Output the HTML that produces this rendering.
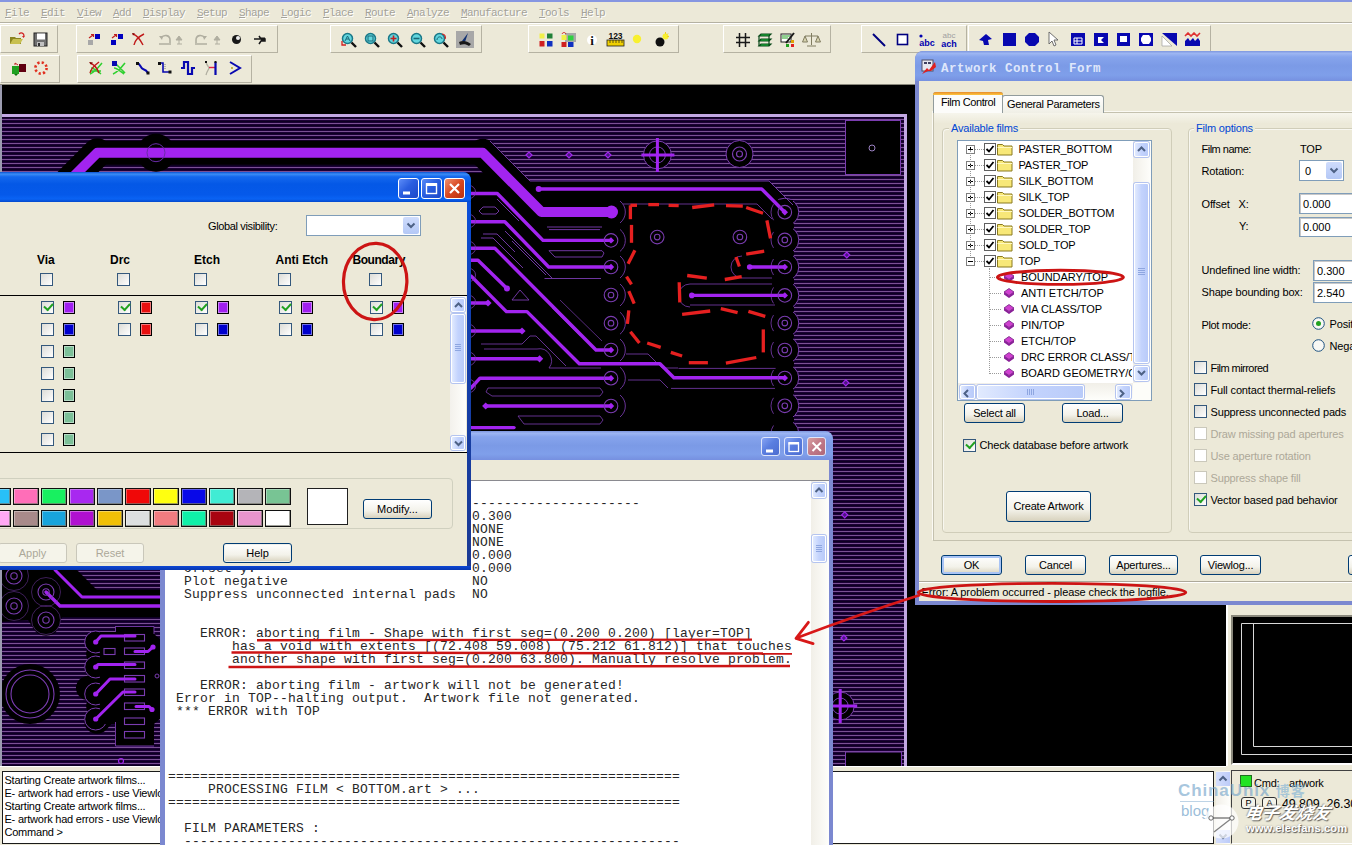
<!DOCTYPE html>
<html><head><meta charset="utf-8"><title>Artwork Control Form</title>
<style>
*{box-sizing:border-box;margin:0;padding:0}
html,body{width:1352px;height:845px;overflow:hidden;background:#ece9d8;font-family:"Liberation Sans",sans-serif;font-size:11px;color:#000}
.abs{position:absolute}
#root{position:absolute;left:0;top:0;width:1352px;height:845px;overflow:hidden;background:#ece9d8}
#topstrip{left:0;top:0;width:1352px;height:2px;background:#8696e1}
#menu{left:0;top:3px;width:1352px;height:20px;background:#ece9d8}
#menu span{position:absolute;top:5px;font-family:"Liberation Mono",monospace;font-size:11px;letter-spacing:-0.6px;color:#a3a29a;text-shadow:1px 1px 0 #fff;white-space:pre;line-height:1}
.tbg{position:absolute;border:1px solid;border-color:#fff #b5b2a2 #b5b2a2 #fff;background:#ece9d8}
#canvas{left:0;top:85px;width:1230px;height:681px;background:#000;overflow:hidden}
.btn{position:absolute;border:1px solid #003c74;border-radius:3px;background:linear-gradient(#fff,#f3f2ea 60%,#d8d2bd);font-size:11px;text-align:center;color:#000;white-space:pre}
.btn.dis{border-color:#c9c7ba;background:#f5f4ea;color:#aca899}
.cb{position:absolute;width:13px;height:13px;border:1px solid #34587c;background:linear-gradient(135deg,#dcdcd7,#fff)}
.cb.dis{border-color:#cac8bb;background:#fff}
.cb.on::after{content:"";position:absolute;left:2px;top:1px;width:7px;height:4px;border-left:2px solid #21a121;border-bottom:2px solid #21a121;transform:rotate(-48deg)}
.sw{position:absolute;width:12px;height:13px;border:1px solid #000;box-shadow:inset 0 0 0 1px rgba(255,255,255,.45)}
.t{position:absolute;white-space:pre;line-height:1}
.b{font-weight:bold}
.sbtn{position:absolute;border:1px solid #fff;border-radius:2px;background:linear-gradient(90deg,#e1eafe,#c3d3fd 50%,#b9cbf9);box-shadow:0 0 0 1px #b4c4f0}
.chev{position:absolute;left:50%;top:50%}
.titlebtn{position:absolute;width:21px;height:21px;border:1px solid #fff;border-radius:3px}
</style></head><body><div id="root">
<div id="topstrip" class="abs"></div>
<div id="menu" class="abs">
<span style="left:5px"><u>F</u>ile</span>
<span style="left:41px"><u>E</u>dit</span>
<span style="left:77px"><u>V</u>iew</span>
<span style="left:113px"><u>A</u>dd</span>
<span style="left:143px"><u>D</u>isplay</span>
<span style="left:197px"><u>S</u>etup</span>
<span style="left:239px"><u>S</u>hape</span>
<span style="left:281px"><u>L</u>ogic</span>
<span style="left:323px"><u>P</u>lace</span>
<span style="left:365px"><u>R</u>oute</span>
<span style="left:407px"><u>A</u>nalyze</span>
<span style="left:461px"><u>M</u>anufacture</span>
<span style="left:539px"><u>T</u>ools</span>
<span style="left:581px"><u>H</u>elp</span>
</div>
<div class="abs" style="left:0;top:22px;width:1352px;height:1px;background:#b4b1a2"></div>
<div class="abs" style="left:0;top:23px;width:1352px;height:1px;background:#fff"></div>
<div class="tbg" style="left:0px;top:25px;width:58px;height:28px"></div>
<div class="tbg" style="left:76px;top:25px;width:202px;height:28px"></div>
<div class="tbg" style="left:330px;top:25px;width:152px;height:28px"></div>
<div class="tbg" style="left:528px;top:25px;width:151px;height:28px"></div>
<div class="tbg" style="left:723px;top:25px;width:108px;height:28px"></div>
<div class="tbg" style="left:861px;top:25px;width:106px;height:28px"></div>
<div class="tbg" style="left:968px;top:25px;width:243px;height:28px"></div>
<div class="tbg" style="left:0px;top:55px;width:60px;height:28px"></div>
<div class="tbg" style="left:77px;top:55px;width:175px;height:28px"></div>
<div class="abs" style="left:0;top:84px;width:1352px;height:1px;background:#8a887c"></div>
<svg class="abs" style="left:9px;top:32px" width="17" height="15" viewBox="0 0 17 15"><path d="M1 5h5l1 1h5v6H1z" fill="#8a8420"/><path d="M1 12l3-5h10l-3 5z" fill="#c8c050"/><path d="M10 2c2-2 5-1 5 2" stroke="#d02020" fill="none" stroke-width="1.3"/><path d="M13 4h3l-1.5 2z" fill="#d02020"/></svg>
<svg class="abs" style="left:33px;top:32px" width="15" height="15" viewBox="0 0 15 15"><rect x="1" y="1" width="13" height="13" fill="#707070" stroke="#202020"/><rect x="4" y="1.5" width="8" height="6" fill="#fff"/><rect x="4" y="10" width="7" height="4" fill="#c0c0c0"/><rect x="5" y="11" width="2" height="3" fill="#303030"/></svg>
<svg class="abs" style="left:87px;top:33px" width="15" height="14" viewBox="0 0 15 14"><rect x="8" y="1" width="5" height="5" fill="#0000c0"/><rect x="1" y="7" width="5" height="5" fill="#a8a8a8"/><path d="M2 5l4-3M4 1.5h2.5v2.5" stroke="#c02020" fill="none" stroke-width="1.2"/></svg>
<svg class="abs" style="left:110px;top:33px" width="15" height="14" viewBox="0 0 15 14"><rect x="8" y="1" width="5" height="5" fill="#0000c0"/><rect x="1" y="7" width="5" height="5" fill="#0000c0"/><path d="M2 5l4-3M4 1.5h2.5v2.5" stroke="#c02020" fill="none" stroke-width="1.2"/></svg>
<svg class="abs" style="left:131px;top:32px" width="16" height="16" viewBox="0 0 16 16"><path d="M2 2c3 1 7 5 10 11M13 2c-4 2-9 5-10 11" stroke="#c01818" fill="none" stroke-width="1.4"/><path d="M1 1l3 .5-2 2z" fill="#800000"/></svg>
<svg class="abs" style="left:158px;top:33px" width="26" height="14" viewBox="0 0 26 14"><path d="M3 5c3-4 9-3 9 2v3M1 11h12" stroke="#b0aea0" fill="none" stroke-width="1.6"/><path d="M1 3l4 0-1 4z" fill="#b0aea0"/><path d="M21 3l3 4h-6zM19 11h5M21 7v4" stroke="#b0aea0" fill="#b0aea0" stroke-width="1"/></svg>
<svg class="abs" style="left:194px;top:33px" width="27" height="14" viewBox="0 0 27 14"><path d="M11 5c-3-4-9-3-9 2v3M1 11h12" stroke="#b0aea0" fill="none" stroke-width="1.6"/><path d="M13 3l-4 0 1 4z" fill="#b0aea0"/><path d="M23 3l3 4h-6zM21 11h5M23 7v4" stroke="#b0aea0" fill="#b0aea0" stroke-width="1"/></svg>
<svg class="abs" style="left:231px;top:34px" width="12" height="12" viewBox="0 0 12 12"><circle cx="5.5" cy="5.5" r="4.5" fill="#181818"/><circle cx="7" cy="4" r="2" fill="#f0f0f0"/></svg>
<svg class="abs" style="left:253px;top:34px" width="14" height="12" viewBox="0 0 14 12"><path d="M1 5h8M6 2l2 3h4v2H8l-2 3" stroke="#181818" fill="none" stroke-width="1.5"/><rect x="8" y="3.5" width="4" height="3.5" fill="#181818"/></svg>
<svg class="abs" style="left:341px;top:32px" width="17" height="17" viewBox="0 0 17 17"><circle cx="6.5" cy="6.5" r="5" fill="#62d6de" stroke="#1a7888" stroke-width="1.5"/><path d="M10.5 10.5l4.5 4.5" stroke="#101010" stroke-width="2.4"/><path d="M4 9l2.5-5 2.5 5M5 7h3" stroke="#1a6878" fill="none"/><path d="M1 9v4h4" stroke="#d02020" fill="none" stroke-width="1.300"/></svg>
<svg class="abs" style="left:364px;top:32px" width="17" height="17" viewBox="0 0 17 17"><circle cx="6.5" cy="6.5" r="5" fill="#62d6de" stroke="#1a7888" stroke-width="1.5"/><path d="M10.5 10.5l4.5 4.5" stroke="#101010" stroke-width="2.4"/><rect x="4" y="4" width="5" height="5" fill="none" stroke="#1a6878"/></svg>
<svg class="abs" style="left:387px;top:32px" width="17" height="17" viewBox="0 0 17 17"><circle cx="6.5" cy="6.5" r="5" fill="#62d6de" stroke="#1a7888" stroke-width="1.5"/><path d="M10.5 10.5l4.5 4.5" stroke="#101010" stroke-width="2.4"/><path d="M3.5 6.5h6M6.5 3.5v6" stroke="#c02020" stroke-width="1.6"/></svg>
<svg class="abs" style="left:410px;top:32px" width="17" height="17" viewBox="0 0 17 17"><circle cx="6.5" cy="6.5" r="5" fill="#62d6de" stroke="#1a7888" stroke-width="1.5"/><path d="M10.5 10.5l4.5 4.5" stroke="#101010" stroke-width="2.4"/><path d="M3.5 6.5h6" stroke="#1a6878" stroke-width="1.6"/></svg>
<svg class="abs" style="left:433px;top:32px" width="17" height="17" viewBox="0 0 17 17"><circle cx="6.5" cy="6.5" r="5" fill="#62d6de" stroke="#1a7888" stroke-width="1.5"/><path d="M10.5 10.5l4.5 4.5" stroke="#101010" stroke-width="2.4"/><path d="M4 8c0-4 5-4 5-1" stroke="#1a6878" fill="none"/><path d="M9 2c3 0 4 3 3 5" stroke="#d02020" fill="none" stroke-width="1.200"/></svg>
<svg class="abs" style="left:456px;top:31px" width="18" height="17" viewBox="0 0 18 17"><rect x="0" y="0" width="18" height="17" fill="#a8a8a8"/><path d="M12 2l-6 8 3 1z" fill="#103070"/><path d="M3 11c4-2 8-1 12 2l-2 2c-3-2-6-2-9-1z" fill="#181818"/></svg>
<svg class="abs" style="left:538px;top:32px" width="16" height="16" viewBox="0 0 16 16"><rect x="1.500" y="1.500" width="5" height="5" fill="#f0f048"/><rect x="9" y="1.500" width="5.500" height="5" fill="#208038"/><rect x="1.500" y="9" width="5" height="5.500" fill="#d02020"/><rect x="9" y="9" width="5.500" height="5.500" fill="#1030c0"/></svg>
<svg class="abs" style="left:560px;top:32px" width="17" height="16" viewBox="0 0 17 16"><rect x="5" y="1" width="11" height="9" fill="#a8a8a8"/><rect x="1.500" y="3" width="5" height="5" fill="#f0f048"/><rect x="8" y="3.500" width="5.500" height="5" fill="#30d040"/><rect x="1.500" y="10" width="5" height="5" fill="#d02020"/><rect x="8" y="10" width="5.500" height="5" fill="#1030c0"/><path d="M2 2c1-2 3-2 4 0" stroke="#d02020" fill="none"/></svg>
<svg class="abs" style="left:587px;top:32px" width="10" height="16" viewBox="0 0 10 16"><circle cx="5" cy="8" r="5" fill="#fff"/><text x="5" y="12.500" font-family="Liberation Serif,serif" font-weight="bold" font-size="13" text-anchor="middle" fill="#101010">i</text></svg>
<svg class="abs" style="left:606px;top:31px" width="19" height="17" viewBox="0 0 19 17"><text x="9.5" y="7.5" font-family="Liberation Sans,sans-serif" font-weight="bold" font-size="8.5" text-anchor="middle" fill="#101010">123</text><rect x="1" y="9" width="17" height="6" fill="#f0d000" stroke="#202020" stroke-width=".8"/><path d="M4 9v3M7 9v3M10 9v3M13 9v3M16 9v3" stroke="#202020" stroke-width=".7"/></svg>
<svg class="abs" style="left:631px;top:33px" width="12" height="12" viewBox="0 0 12 12"><circle cx="6" cy="6" r="4.2" fill="#f8f030"/></svg>
<svg class="abs" style="left:654px;top:32px" width="16" height="16" viewBox="0 0 16 16"><circle cx="6" cy="10" r="4.5" fill="#101010"/><circle cx="11.5" cy="4.5" r="3" fill="#f8f030"/><path d="M11.5 0v2M15 4.5h-2M14 1.5l-1 1" stroke="#f0d020"/></svg>
<svg class="abs" style="left:735px;top:32px" width="16" height="16" viewBox="0 0 16 16"><path d="M4.5 1v14M10.5 1v14M1 5.5h14M1 10.500h14" stroke="#181818" stroke-width="1.5"/></svg>
<svg class="abs" style="left:757px;top:32px" width="16" height="16" viewBox="0 0 16 16"><path d="M2 4l2-2h10l-2 2zM2 9l2-2h10l-2 2zM2 14l2-2h10l-2 2z" fill="#20c040" stroke="#084818" stroke-width="1.2"/><path d="M2 4v10M12 4v10" stroke="#084818" stroke-width="1.2"/></svg>
<svg class="abs" style="left:780px;top:32px" width="18" height="16" viewBox="0 0 18 16"><rect x="1" y="2" width="10" height="8" fill="#fff" stroke="#202020"/><path d="M2 4h8M2 6h6" stroke="#20a020"/><path d="M14 1l-8 10" stroke="#181818" stroke-width="2"/><rect x="11" y="8" width="3" height="3" fill="#e0a000"/><rect x="11" y="12" width="3" height="3" fill="#e02020"/><rect x="6" y="12" width="3" height="3" fill="#20a020"/></svg>
<svg class="abs" style="left:802px;top:32px" width="19" height="16" viewBox="0 0 19 16"><path d="M9.500 1v12M3 4h13M3 4l-2.500 6h5zM16 4l-2.500 6h5zM5 14h9" stroke="#807c60" fill="#d8d4b0" stroke-width="1"/></svg>
<svg class="abs" style="left:871px;top:32px" width="16" height="16" viewBox="0 0 16 16"><path d="M2 2l12 12" stroke="#000080" stroke-width="2"/></svg>
<svg class="abs" style="left:896px;top:33px" width="14" height="14" viewBox="0 0 14 14"><rect x="1.500" y="1.500" width="10" height="10" fill="#fff" stroke="#000080" stroke-width="1.6"/></svg>
<svg class="abs" style="left:918px;top:33px" width="18" height="14" viewBox="0 0 18 14"><circle cx="3" cy="3" r="1.600" fill="#0000b0"/><text x="9" y="12.500" font-family="Liberation Sans,sans-serif" font-weight="bold" font-size="9" text-anchor="middle" fill="#0000b0">abc</text></svg>
<svg class="abs" style="left:940px;top:31px" width="18" height="17" viewBox="0 0 18 17"><text x="9" y="7" font-family="Liberation Sans,sans-serif" font-size="8" text-anchor="middle" fill="#a0a0a0">abc</text><text x="9" y="15.500" font-family="Liberation Sans,sans-serif" font-weight="bold" font-size="9" text-anchor="middle" fill="#0000b0">ach</text></svg>
<svg class="abs" style="left:978px;top:32px" width="15" height="15" viewBox="0 0 15 15"><path d="M1 8l7-6 6 5-4 1 1 5H6l-1-4z" fill="#0808b0"/></svg>
<svg class="abs" style="left:1002px;top:32px" width="15" height="15" viewBox="0 0 15 15"><rect x="1" y="1" width="13" height="13" fill="#0808b0"/></svg>
<svg class="abs" style="left:1024px;top:32px" width="16" height="15" viewBox="0 0 16 15"><path d="M5 1h6l4 4v5l-4 4H5l-4-4V5z" fill="#0808b0"/></svg>
<svg class="abs" style="left:1047px;top:31px" width="12" height="17" viewBox="0 0 12 17"><path d="M2 1v12l3-3 2 5 2-1-2-5h4z" fill="#fff" stroke="#606060" stroke-width=".9"/></svg>
<svg class="abs" style="left:1070px;top:32px" width="16" height="15" viewBox="0 0 16 15"><rect x="1" y="1" width="14" height="13" fill="#0808b0"/><path d="M4 6h8v6H4zM7 6v6M4 9h8" stroke="#fff" fill="none"/></svg>
<svg class="abs" style="left:1093px;top:32px" width="16" height="15" viewBox="0 0 16 15"><rect x="1" y="1" width="14" height="13" fill="#0808b0"/><path d="M5 5h6l-3 3 3 3H5z" fill="#fff"/></svg>
<svg class="abs" style="left:1116px;top:32px" width="15" height="15" viewBox="0 0 15 15"><rect x="1" y="1" width="13" height="13" fill="#0808b0"/><rect x="4" y="4" width="7" height="6" fill="#fff"/></svg>
<svg class="abs" style="left:1138px;top:32px" width="16" height="15" viewBox="0 0 16 15"><rect x="1" y="1" width="14" height="13" fill="#0808b0"/><path d="M5 3h6l2 3v3l-2 3H5l-2-3V6z" fill="#fff"/></svg>
<svg class="abs" style="left:1161px;top:32px" width="17" height="15" viewBox="0 0 17 15"><path d="M1 1h15v13z" fill="#0808b0"/><path d="M1 4l10 10H1z" fill="#fff" stroke="#909090" stroke-width=".6"/></svg>
<svg class="abs" style="left:1184px;top:32px" width="17" height="15" viewBox="0 0 17 15"><path d="M1 4l3-3 3 3 3-3 3 3 3-3" stroke="#e03030" fill="none" stroke-width="1.6"/><path d="M1 14V9l3-3 2 3 3-3 2 3 3-3 2 3v5z" fill="#0808b0"/></svg>
<svg class="abs" style="left:11px;top:60px" width="16" height="16" viewBox="0 0 16 16"><rect x="1" y="6" width="7" height="8" fill="#20a020"/><rect x="8" y="4" width="7" height="8" fill="#600010"/><path d="M4 3l3 2M4 3v2" stroke="#c02020"/><path d="M3 14l2 2 2-2" fill="#107010"/></svg>
<svg class="abs" style="left:33px;top:60px" width="16" height="16" viewBox="0 0 16 16"><circle cx="8" cy="8" r="5.600" fill="none" stroke="#e03020" stroke-width="2.600" stroke-dasharray="2.200 2.200"/></svg>
<svg class="abs" style="left:88px;top:60px" width="16" height="16" viewBox="0 0 16 16"><path d="M2 14c5-2 8-6 12-11M3 8c3 0 6 3 10 6M2 11l11 0" stroke="#30d030" fill="none" stroke-width="1.500"/><path d="M2 3c3 1 7 5 9 10M11 2c-4 3-8 6-9 11" stroke="#c01818" fill="none" stroke-width="1.400"/><path d="M1 2l4 .5-2 2z" fill="#800000"/></svg>
<svg class="abs" style="left:111px;top:60px" width="16" height="16" viewBox="0 0 16 16"><path d="M2 14c5-2 8-6 12-11M3 8c3 0 6 3 10 6M5 4l9 9" stroke="#30d030" fill="none" stroke-width="1.600"/><rect x="1" y="1" width="5" height="5" fill="#0808b0"/></svg>
<svg class="abs" style="left:135px;top:61px" width="16" height="14" viewBox="0 0 16 14"><path d="M2 2c4 1 3 5 6 6s4 2 5 4" stroke="#0808b0" fill="none" stroke-width="2"/><rect x="1" y="1" width="3" height="3" fill="#101010"/><rect x="11.500" y="10.500" width="3" height="3" fill="#101010"/></svg>
<svg class="abs" style="left:157px;top:61px" width="16" height="14" viewBox="0 0 16 14"><path d="M3 2h3v9h7" stroke="#0808b0" fill="none" stroke-width="1.600"/><rect x="1" y="1" width="3" height="3" fill="#101010"/><rect x="11.500" y="9.500" width="3" height="3" fill="#101010"/><path d="M8 3v5" stroke="#808080" stroke-dasharray="1 1"/></svg>
<svg class="abs" style="left:180px;top:60px" width="16" height="16" viewBox="0 0 16 16"><path d="M1 8h3V2h4v12h4V8h3" stroke="#0808b0" fill="none" stroke-width="2.200"/></svg>
<svg class="abs" style="left:204px;top:60px" width="14" height="16" viewBox="0 0 14 16"><path d="M2 2c1 4 3 5 3 6s-2 3-3 7" stroke="#b0aea0" fill="none" stroke-width="1.300"/><path d="M5 7.500h6" stroke="#e02040" stroke-width="1.400"/><path d="M11.500 2v13" stroke="#0808b0" stroke-width="2.200"/><rect x="1" y="1" width="2" height="2" fill="#101010"/><rect x="10.500" y="1" width="2" height="2" fill="#101010"/></svg>
<svg class="abs" style="left:228px;top:60px" width="14" height="16" viewBox="0 0 14 16"><path d="M2 2l10 6-10 6" stroke="#0808b0" fill="none" stroke-width="2"/><circle cx="4" cy="8" r="1" fill="#b0a020"/></svg>
<svg class="abs" style="left:0;top:85px" width="1230" height="681" viewBox="0 85 1230 681" shape-rendering="auto">
<defs><pattern id="hatch" x="0" y="0" width="8" height="4" patternUnits="userSpaceOnUse"><rect width="8" height="4" fill="#1b0036"/><rect y="1" width="8" height="1" fill="#0d0022"/><rect y="3" width="8" height="1" fill="#7a5094"/></pattern></defs>
<rect x="0" y="85" width="1230" height="681" fill="#000"/>
<rect x="0" y="116" width="905" height="650" fill="url(#hatch)"/>
<path d="M465 173 L522 173 L530 181 L769 181 L794 206 L794 432 L465 432Z" fill="#000"/>
<path d="M40 210 L97.300 152.700 L482.700 152.700 L541.400 212 L611 212" fill="none" stroke="#000" stroke-width="24" stroke-linecap="round" stroke-linejoin="round" />
<path d="M40 210 L97.300 152.700" fill="none" stroke="#000" stroke-width="29" stroke-linecap="round" stroke-linejoin="round" />
<path d="M482.700 152.700 L541.400 212" fill="none" stroke="#000" stroke-width="28" stroke-linecap="round" stroke-linejoin="round" />
<circle cx="156" cy="152.700" r="19" fill="#000"/>
<circle cx="784.800" cy="212.2" r="14" fill="#000" stroke="#7a3cb0" stroke-width="1"/>
<circle cx="784.800" cy="239.9" r="14" fill="#000" stroke="#7a3cb0" stroke-width="1"/>
<circle cx="784.800" cy="267" r="14" fill="#000" stroke="#7a3cb0" stroke-width="1"/>
<circle cx="784.800" cy="295.4" r="14" fill="#000" stroke="#7a3cb0" stroke-width="1"/>
<circle cx="784.800" cy="323.1" r="14" fill="#000" stroke="#7a3cb0" stroke-width="1"/>
<circle cx="784.800" cy="350" r="14" fill="#000" stroke="#7a3cb0" stroke-width="1"/>
<circle cx="784.800" cy="378" r="14" fill="#000" stroke="#7a3cb0" stroke-width="1"/>
<circle cx="784.800" cy="405.8" r="14" fill="#000" stroke="#7a3cb0" stroke-width="1"/>
<circle cx="784.800" cy="433.5" r="14" fill="#000" stroke="#7a3cb0" stroke-width="1"/>
<rect x="760" y="200" width="33" height="232" fill="#000"/>
<path d="M773.500 204.2 A14 14 0 0 0 773.500 220.2" fill="none" stroke="#7a3cb0" stroke-width="1" opacity=".8"/>
<path d="M773.500 231.9 A14 14 0 0 0 773.500 247.9" fill="none" stroke="#7a3cb0" stroke-width="1" opacity=".8"/>
<path d="M773.500 259 A14 14 0 0 0 773.500 275" fill="none" stroke="#7a3cb0" stroke-width="1" opacity=".8"/>
<path d="M773.500 287.4 A14 14 0 0 0 773.500 303.4" fill="none" stroke="#7a3cb0" stroke-width="1" opacity=".8"/>
<path d="M773.500 315.1 A14 14 0 0 0 773.500 331.1" fill="none" stroke="#7a3cb0" stroke-width="1" opacity=".8"/>
<path d="M773.500 342 A14 14 0 0 0 773.500 358" fill="none" stroke="#7a3cb0" stroke-width="1" opacity=".8"/>
<path d="M773.500 370 A14 14 0 0 0 773.500 386" fill="none" stroke="#7a3cb0" stroke-width="1" opacity=".8"/>
<path d="M773.500 397.8 A14 14 0 0 0 773.500 413.8" fill="none" stroke="#7a3cb0" stroke-width="1" opacity=".8"/>
<path d="M773.500 425.5 A14 14 0 0 0 773.500 441.5" fill="none" stroke="#7a3cb0" stroke-width="1" opacity=".8"/>
<rect x="845.500" y="120.500" width="55" height="54" fill="#000" stroke="#7a3cb0" stroke-width="1"/>
<circle cx="872" cy="148" r="3" fill="none" stroke="#9a80c0" stroke-width="1"/>
<rect x="845.500" y="752" width="56" height="16" fill="#000" stroke="#7a3cb0" stroke-width="1"/>
<path d="M526 155L529 152L532 155L529 158Z" fill="#4a1880" stroke="#a224f0" stroke-width="1.200"/>
<path d="M566 155L569 152L572 155L569 158Z" fill="#4a1880" stroke="#a224f0" stroke-width="1.200"/>
<path d="M605 155L608 152L611 155L608 158Z" fill="#4a1880" stroke="#a224f0" stroke-width="1.200"/>
<path d="M843.8 255L846.8 252L849.8 255L846.8 258Z" fill="#4a1880" stroke="#a224f0" stroke-width="1.200"/>
<path d="M842.8 382.8L845.8 379.8L848.8 382.8L845.8 385.8Z" fill="#4a1880" stroke="#a224f0" stroke-width="1.200"/>
<path d="M841.7 514.8L844.7 511.79999999999995L847.7 514.8L844.7 517.8Z" fill="#4a1880" stroke="#a224f0" stroke-width="1.200"/>
<path d="M840.9 638L843.9 635L846.9 638L843.9 641Z" fill="#4a1880" stroke="#a224f0" stroke-width="1.200"/>
<circle cx="657.4" cy="154.9" r="14" fill="#000" stroke="#7a3cb0" stroke-width="1"/>
<circle cx="657.4" cy="154.9" r="8" fill="none" stroke="#7a3cb0" stroke-width="1"/>
<path d="M641.4 154.9H674.4M657.4 137.9V171.9" stroke="#a224f0" stroke-width="3" fill="none"/>
<circle cx="840.2" cy="706" r="14" fill="#000" stroke="#7a3cb0" stroke-width="1"/>
<circle cx="840.2" cy="706" r="8" fill="none" stroke="#7a3cb0" stroke-width="1"/>
<path d="M824.2 706H857.2M840.2 689V723" stroke="#a224f0" stroke-width="3" fill="none"/>
<circle cx="739.500" cy="154" r="13.500" fill="#000" stroke="#7a3cb0" stroke-width="1"/>
<circle cx="739.500" cy="154" r="7" fill="none" stroke="#7a3cb0" stroke-width="1.200"/><circle cx="739.500" cy="154" r="3" fill="none" stroke="#7a3cb0" stroke-width="1.200"/>
<path d="M490 141 L530 181 L769 181 L793 205" fill="none" stroke="#7a3cb0" stroke-width="1" opacity="0.9"/>
<path d="M547 227 H602 M549 229.600 H600" fill="none" stroke="#7a3cb0" stroke-width="1" opacity="0.9"/>
<path d="M549 250.700 H602 L604 253 L602 257 H555 L549 250.700" fill="none" stroke="#7a3cb0" stroke-width="1" opacity="0.9"/>
<path d="M544.500 278.500 H601" fill="none" stroke="#7a3cb0" stroke-width="1" opacity="0.9"/>
<path d="M497 199 L519 221 M505 231 L552 278 M512 241 L546 275" fill="none" stroke="#7a3cb0" stroke-width="1" opacity="0.9"/>
<path d="M483 207 h12 l4 4 -3 3 h-14 l-3 -3z" fill="none" stroke="#7a3cb0" stroke-width="1" opacity="0.9"/>
<path d="M512 300 L520 290 L529 300Z" fill="none" stroke="#7a3cb0" stroke-width="1" opacity="0.9"/>
<path d="M483 234 h14 l18 18 M481 238 h12 l30 30" fill="none" stroke="#7a3cb0" stroke-width="1" opacity="0.9"/>
<path d="M481 344 H522 L530 336 L536 336 L566 366 M484 349 H537 A12 12 0 0 1 549 368 H601" fill="none" stroke="#7a3cb0" stroke-width="1" opacity="0.8"/>
<path d="M488 388 H600 L603 392 L600 396 H492 L486 392Z" fill="none" stroke="#7a3cb0" stroke-width="1" opacity="0.8"/>
<path d="M518 416 H600 L603 420 L600 424 H524Z" fill="none" stroke="#7a3cb0" stroke-width="1" opacity="0.8"/>
<path d="M560 300 L602 341 M552 308 L580 336" fill="none" stroke="#7a3cb0" stroke-width="1" opacity="0.7"/>
<path d="M690 305 H775 M678.500 368.400 H775.600 M671 388.400 H775 M626 354 H648 L662 368 H678 M628 380 H660 L668 388" fill="none" stroke="#7a3cb0" stroke-width="1" opacity="0.8"/>
<path d="M623 204 H757 L772 219" fill="none" stroke="#7a3cb0" stroke-width="1" opacity="0.8"/>
<path d="M742 256 A11 11 0 0 0 742 278 H772 M690 284 A11.500 11.500 0 0 0 690 307 M690 284 H772" fill="none" stroke="#7a3cb0" stroke-width="1" opacity="0.8"/>
<path d="M620 201 A14 14 0 0 1 620 223" fill="none" stroke="#7a3cb0" stroke-width="1" opacity=".85"/>
<path d="M620 229.4 A14 14 0 0 1 620 251.4" fill="none" stroke="#7a3cb0" stroke-width="1" opacity=".85"/>
<path d="M620 256 A14 14 0 0 1 620 278" fill="none" stroke="#7a3cb0" stroke-width="1" opacity=".85"/>
<path d="M620 284 A14 14 0 0 1 620 306" fill="none" stroke="#7a3cb0" stroke-width="1" opacity=".85"/>
<path d="M620 312.2 A14 14 0 0 1 620 334.2" fill="none" stroke="#7a3cb0" stroke-width="1" opacity=".85"/>
<path d="M620 339 A14 14 0 0 1 620 361" fill="none" stroke="#7a3cb0" stroke-width="1" opacity=".85"/>
<path d="M620 367.2 A14 14 0 0 1 620 389.2" fill="none" stroke="#7a3cb0" stroke-width="1" opacity=".85"/>
<path d="M620 395 A14 14 0 0 1 620 417" fill="none" stroke="#7a3cb0" stroke-width="1" opacity=".85"/>
<path d="M40 210 L97.300 152.700 L482.700 152.700 L541.400 212 L611 212" fill="none" stroke="#a224f0" stroke-width="10" stroke-linecap="round" stroke-linejoin="round" />
<circle cx="611.500" cy="212" r="6.500" fill="#a224f0"/>
<circle cx="156" cy="152.700" r="9" fill="none" stroke="#6a2ca8" stroke-width="1"/>
<path d="M538.700 189 H761.700 L784.800 212.200" fill="none" stroke="#a224f0" stroke-width="3.4" stroke-linecap="round" stroke-linejoin="round" />
<circle cx="538.700" cy="189" r="3" fill="#a224f0"/>
<path d="M471 193.500 H497.300 L543 240.400 H611" fill="none" stroke="#a224f0" stroke-width="3.4" stroke-linecap="round" stroke-linejoin="round" />
<path d="M471 221.700 H504.800 L548.700 267 H611" fill="none" stroke="#a224f0" stroke-width="3.4" stroke-linecap="round" stroke-linejoin="round" />
<path d="M471 248.200 H494.800 L596 350 H611" fill="none" stroke="#a224f0" stroke-width="3.4" stroke-linecap="round" stroke-linejoin="round" />
<path d="M471 260.300 H478 L507 288.500" fill="none" stroke="#a224f0" stroke-width="3.4" stroke-linecap="round" stroke-linejoin="round" />
<circle cx="507" cy="288.500" r="3" fill="#a224f0"/>
<path d="M471 276 L506.400 311.600 H527 L579.300 363.800 H660 L673.900 377.700 H784.800" fill="none" stroke="#a224f0" stroke-width="3.4" stroke-linecap="round" stroke-linejoin="round" />
<path d="M471 303 H488" fill="none" stroke="#a224f0" stroke-width="3.4" stroke-linecap="round" stroke-linejoin="round" />
<path d="M484.4 303L488 299.4L491.6 303L488 306.6Z" fill="#a224f0"/>
<path d="M471 331 H522" fill="none" stroke="#a224f0" stroke-width="3.4" stroke-linecap="round" stroke-linejoin="round" />
<path d="M518.4 331L522 327.4L525.6 331L522 334.6Z" fill="#a224f0"/>
<path d="M471 358.800 H539.600" fill="none" stroke="#a224f0" stroke-width="3.4" stroke-linecap="round" stroke-linejoin="round" />
<path d="M536.0 358.8L539.6 355.2L543.2 358.8L539.6 362.40000000000003Z" fill="#a224f0"/>
<path d="M471 388 L480 378.200 H611" fill="none" stroke="#a224f0" stroke-width="3.4" stroke-linecap="round" stroke-linejoin="round" />
<path d="M485.700 406 H611" fill="none" stroke="#a224f0" stroke-width="3.4" stroke-linecap="round" stroke-linejoin="round" />
<path d="M482.09999999999997 406L485.7 402.4L489.3 406L485.7 409.6Z" fill="#a224f0"/>
<path d="M471 427.600 H514" fill="none" stroke="#a224f0" stroke-width="3.4" stroke-linecap="round" stroke-linejoin="round" />
<path d="M749.700 267 H784.800" fill="none" stroke="#a224f0" stroke-width="3.4" stroke-linecap="round" stroke-linejoin="round" />
<circle cx="749.700" cy="267" r="2.800" fill="#a224f0"/>
<path d="M691.800 295.400 H784.800" fill="none" stroke="#a224f0" stroke-width="3.4" stroke-linecap="round" stroke-linejoin="round" />
<circle cx="691.800" cy="295.400" r="2.800" fill="#a224f0"/>
<circle cx="611" cy="240.4" r="6.800" fill="none" stroke="#7a3cb0" stroke-width="1.100"/>
<path d="M607.8 240.4L611 237.20000000000002L614.2 240.4L611 243.6Z" fill="#a224f0"/>
<circle cx="611" cy="267" r="6.800" fill="none" stroke="#7a3cb0" stroke-width="1.100"/>
<path d="M607.8 267L611 263.8L614.2 267L611 270.2Z" fill="#a224f0"/>
<circle cx="611" cy="295" r="6.800" fill="none" stroke="#7a3cb0" stroke-width="1.100"/>
<circle cx="611" cy="295" r="2.800" fill="none" stroke="#7a3cb0" stroke-width="1.100"/>
<circle cx="611" cy="323.2" r="6.800" fill="none" stroke="#7a3cb0" stroke-width="1.100"/>
<circle cx="611" cy="323.2" r="2.800" fill="none" stroke="#7a3cb0" stroke-width="1.100"/>
<circle cx="611" cy="350" r="6.800" fill="none" stroke="#7a3cb0" stroke-width="1.100"/>
<path d="M607.8 350L611 346.8L614.2 350L611 353.2Z" fill="#a224f0"/>
<circle cx="611" cy="378.2" r="6.800" fill="none" stroke="#7a3cb0" stroke-width="1.100"/>
<path d="M607.8 378.2L611 375.0L614.2 378.2L611 381.4Z" fill="#a224f0"/>
<circle cx="611" cy="406" r="6.800" fill="none" stroke="#7a3cb0" stroke-width="1.100"/>
<path d="M607.8 406L611 402.8L614.2 406L611 409.2Z" fill="#a224f0"/>
<circle cx="784.8" cy="212.2" r="6.800" fill="none" stroke="#7a3cb0" stroke-width="1.100"/>
<path d="M781.5999999999999 212.2L784.8 209.0L788.0 212.2L784.8 215.39999999999998Z" fill="#a224f0"/>
<circle cx="784.8" cy="239.9" r="6.800" fill="none" stroke="#7a3cb0" stroke-width="1.100"/>
<circle cx="784.8" cy="239.9" r="2.800" fill="none" stroke="#7a3cb0" stroke-width="1.100"/>
<circle cx="784.8" cy="267" r="6.800" fill="none" stroke="#7a3cb0" stroke-width="1.100"/>
<path d="M781.5999999999999 267L784.8 263.8L788.0 267L784.8 270.2Z" fill="#a224f0"/>
<circle cx="784.8" cy="295.4" r="6.800" fill="none" stroke="#7a3cb0" stroke-width="1.100"/>
<path d="M781.5999999999999 295.4L784.8 292.2L788.0 295.4L784.8 298.59999999999997Z" fill="#a224f0"/>
<circle cx="784.8" cy="323.1" r="6.800" fill="none" stroke="#7a3cb0" stroke-width="1.100"/>
<circle cx="784.8" cy="323.1" r="2.800" fill="none" stroke="#7a3cb0" stroke-width="1.100"/>
<circle cx="784.8" cy="350" r="6.800" fill="none" stroke="#7a3cb0" stroke-width="1.100"/>
<circle cx="784.8" cy="350" r="2.800" fill="none" stroke="#7a3cb0" stroke-width="1.100"/>
<circle cx="784.8" cy="378" r="6.800" fill="none" stroke="#7a3cb0" stroke-width="1.100"/>
<path d="M781.5999999999999 378L784.8 374.8L788.0 378L784.8 381.2Z" fill="#a224f0"/>
<circle cx="784.8" cy="405.8" r="6.800" fill="none" stroke="#7a3cb0" stroke-width="1.100"/>
<circle cx="784.8" cy="405.8" r="2.800" fill="none" stroke="#7a3cb0" stroke-width="1.100"/>
<circle cx="657.2" cy="237.1" r="6.800" fill="none" stroke="#7a3cb0" stroke-width="1.100"/>
<circle cx="657.2" cy="237.1" r="2.800" fill="none" stroke="#7a3cb0" stroke-width="1.100"/>
<circle cx="739.9" cy="237" r="6.800" fill="none" stroke="#7a3cb0" stroke-width="1.100"/>
<circle cx="739.9" cy="237" r="2.800" fill="none" stroke="#7a3cb0" stroke-width="1.100"/>
<circle cx="469" cy="192" r="6.500" fill="none" stroke="#7a3cb0" stroke-width="1" opacity=".8"/>
<circle cx="469" cy="221" r="6.500" fill="none" stroke="#7a3cb0" stroke-width="1" opacity=".8"/>
<circle cx="469" cy="248" r="6.500" fill="none" stroke="#7a3cb0" stroke-width="1" opacity=".8"/>
<circle cx="469" cy="275" r="6.500" fill="none" stroke="#7a3cb0" stroke-width="1" opacity=".8"/>
<circle cx="469" cy="302" r="6.500" fill="none" stroke="#7a3cb0" stroke-width="1" opacity=".8"/>
<circle cx="469" cy="331" r="6.500" fill="none" stroke="#7a3cb0" stroke-width="1" opacity=".8"/>
<circle cx="469" cy="358.8" r="6.500" fill="none" stroke="#7a3cb0" stroke-width="1" opacity=".8"/>
<circle cx="469" cy="386" r="6.500" fill="none" stroke="#7a3cb0" stroke-width="1" opacity=".8"/>
<path d="M630.4 219.2L630.4 205.3" stroke="#e62020" stroke-width="3.300" stroke-linecap="butt" fill="none"/>
<path d="M630.4 205.3L637 205.3" stroke="#e62020" stroke-width="3.300" stroke-linecap="butt" fill="none"/>
<path d="M648.3 204.6L659 204.6" stroke="#e62020" stroke-width="3.300" stroke-linecap="butt" fill="none"/>
<path d="M668.6 205.3L678.7 205.7" stroke="#e62020" stroke-width="3.300" stroke-linecap="butt" fill="none"/>
<path d="M692.2 207.5L714.2 204.8" stroke="#e62020" stroke-width="3.300" stroke-linecap="butt" fill="none"/>
<path d="M726 205.7L742.8 206.2" stroke="#e62020" stroke-width="3.300" stroke-linecap="butt" fill="none"/>
<path d="M746.2 207.5L763 213.2" stroke="#e62020" stroke-width="3.300" stroke-linecap="butt" fill="none"/>
<path d="M766.9 220.4L770.5 238.3" stroke="#e62020" stroke-width="3.300" stroke-linecap="butt" fill="none"/>
<path d="M746.2 254.1L764.2 251.2" stroke="#e62020" stroke-width="3.300" stroke-linecap="butt" fill="none"/>
<path d="M736 257L739.4 266.5" stroke="#e62020" stroke-width="3.300" stroke-linecap="butt" fill="none"/>
<path d="M724.8 279.5L741.7 276.6" stroke="#e62020" stroke-width="3.300" stroke-linecap="butt" fill="none"/>
<path d="M687.2 275.5L706.8 278.2" stroke="#e62020" stroke-width="3.300" stroke-linecap="butt" fill="none"/>
<path d="M679.2 282.2L679.8 302.4" stroke="#e62020" stroke-width="3.300" stroke-linecap="butt" fill="none"/>
<path d="M682.1 314.4L710.2 311" stroke="#e62020" stroke-width="3.300" stroke-linecap="butt" fill="none"/>
<path d="M720.8 308.7L737.6 312.6" stroke="#e62020" stroke-width="3.300" stroke-linecap="butt" fill="none"/>
<path d="M748.4 311.4L765.3 316.4" stroke="#e62020" stroke-width="3.300" stroke-linecap="butt" fill="none"/>
<path d="M763.3 329.4L763.3 352.4" stroke="#e62020" stroke-width="3.300" stroke-linecap="butt" fill="none"/>
<path d="M725.9 363.2L756.3 357.5" stroke="#e62020" stroke-width="3.300" stroke-linecap="butt" fill="none"/>
<path d="M688.8 362.7L707.9 362.7" stroke="#e62020" stroke-width="3.300" stroke-linecap="butt" fill="none"/>
<path d="M670.8 352.4L682.1 356" stroke="#e62020" stroke-width="3.300" stroke-linecap="butt" fill="none"/>
<path d="M647.2 343L660.7 347.4" stroke="#e62020" stroke-width="3.300" stroke-linecap="butt" fill="none"/>
<path d="M630.4 331.7L639.4 343" stroke="#e62020" stroke-width="3.300" stroke-linecap="butt" fill="none"/>
<path d="M628.8 310.3L627.4 323.8" stroke="#e62020" stroke-width="3.300" stroke-linecap="butt" fill="none"/>
<path d="M628.8 291.2L634.2 303.6" stroke="#e62020" stroke-width="3.300" stroke-linecap="butt" fill="none"/>
<path d="M626.5 276.6L631.5 284.4" stroke="#e62020" stroke-width="3.300" stroke-linecap="butt" fill="none"/>
<path d="M634.9 250.3L628.1 263.8" stroke="#e62020" stroke-width="3.300" stroke-linecap="butt" fill="none"/>
<path d="M631.5 224.9L631.5 242.8" stroke="#e62020" stroke-width="3.300" stroke-linecap="butt" fill="none"/>
<path d="M0 568 H161 V617 H62 L56 632 A15 15 0 0 1 32 626 L28 620 L0 622Z" fill="#000"/>
<circle cx="14" cy="576" r="14.500" fill="#000"/>
<circle cx="14" cy="606" r="14.500" fill="#000"/>
<circle cx="46" cy="592" r="14.500" fill="#000"/>
<circle cx="46" cy="620" r="14.500" fill="#000"/>
<path d="M75 568 H161 V590 H97Z" fill="url(#hatch)"/>
<path d="M52 567 L82 597 H161" fill="none" stroke="#000" stroke-width="11" stroke-linecap="round" stroke-linejoin="round"/>
<path d="M46 592 L60 606 H161" fill="none" stroke="#000" stroke-width="11" stroke-linecap="round" stroke-linejoin="round"/>
<path d="M55 570 L82 597 H161" fill="none" stroke="#a224f0" stroke-width="3" stroke-linecap="round" stroke-linejoin="round" />
<path d="M46 592 L60 606 H161" fill="none" stroke="#a224f0" stroke-width="3.4" stroke-linecap="round" stroke-linejoin="round" />
<circle cx="14" cy="576" r="8" fill="none" stroke="#7a3cb0" stroke-width="1.100"/><circle cx="14" cy="576" r="3.200" fill="none" stroke="#7a3cb0" stroke-width="1.100"/>
<circle cx="14" cy="576" r="14.500" fill="none" stroke="#7a3cb0" stroke-width="1" opacity=".5"/>
<circle cx="14" cy="606" r="8" fill="none" stroke="#7a3cb0" stroke-width="1.100"/><circle cx="14" cy="606" r="3.200" fill="none" stroke="#7a3cb0" stroke-width="1.100"/>
<circle cx="14" cy="606" r="14.500" fill="none" stroke="#7a3cb0" stroke-width="1" opacity=".5"/>
<circle cx="46" cy="592" r="8" fill="none" stroke="#7a3cb0" stroke-width="1.100"/><circle cx="46" cy="592" r="3.200" fill="none" stroke="#7a3cb0" stroke-width="1.100"/>
<circle cx="46" cy="592" r="14.500" fill="none" stroke="#7a3cb0" stroke-width="1" opacity=".5"/>
<circle cx="46" cy="620" r="8" fill="none" stroke="#7a3cb0" stroke-width="1.100"/><circle cx="46" cy="620" r="3.200" fill="none" stroke="#7a3cb0" stroke-width="1.100"/>
<circle cx="46" cy="620" r="14.500" fill="none" stroke="#7a3cb0" stroke-width="1" opacity=".5"/>
<circle cx="30" cy="694" r="30" fill="#000"/>
<circle cx="30" cy="694" r="24" fill="none" stroke="#7a3cb0" stroke-width="1.100"/><circle cx="30" cy="694" r="19" fill="none" stroke="#7a3cb0" stroke-width="1.100"/>
<path d="M115 626 H154 V634 L161 640 V718 L154 724 V746 H115 V720 L106 730 A11 11 0 0 1 88 712 A11 11 0 0 1 88 700 A11 11 0 0 1 88 676 A11 11 0 0 1 88 660 A11 11 0 0 1 88 648 A11 11 0 0 1 100 632 L115 632Z" fill="#000"/>
<circle cx="95.700" cy="642" r="11" fill="#000" stroke="#7a3cb0" stroke-width="1" opacity="1"/>
<circle cx="95.700" cy="667" r="11" fill="#000" stroke="#7a3cb0" stroke-width="1" opacity="1"/>
<circle cx="95.700" cy="694" r="11" fill="#000" stroke="#7a3cb0" stroke-width="1" opacity="1"/>
<circle cx="95.700" cy="719" r="11" fill="#000" stroke="#7a3cb0" stroke-width="1" opacity="1"/>
<rect x="100" y="632" width="22" height="92" fill="#000"/>
<path d="M115 626.500 H154 V634 M154 746 H115.500 V722 M115.500 626.500 V632" fill="none" stroke="#7a3cb0" stroke-width="1" opacity="0.9"/>
<rect x="124.500" y="634.5" width="20" height="6.500" fill="none" stroke="#7a3cb0" stroke-width="1.100"/>
<rect x="124.500" y="648" width="20" height="6.500" fill="none" stroke="#7a3cb0" stroke-width="1.100"/>
<rect x="124.500" y="662" width="20" height="6.500" fill="none" stroke="#7a3cb0" stroke-width="1.100"/>
<rect x="124.500" y="675.5" width="20" height="6.500" fill="none" stroke="#7a3cb0" stroke-width="1.100"/>
<rect x="124.500" y="689" width="20" height="6.500" fill="none" stroke="#7a3cb0" stroke-width="1.100"/>
<rect x="124.500" y="703" width="20" height="6.500" fill="none" stroke="#7a3cb0" stroke-width="1.100"/>
<rect x="124.500" y="718" width="20" height="6.500" fill="none" stroke="#7a3cb0" stroke-width="1.100"/>
<rect x="124.500" y="731.5" width="20" height="6.500" fill="none" stroke="#7a3cb0" stroke-width="1.100"/>
<rect x="104" y="648.500" width="11" height="6" fill="none" stroke="#7a3cb0" stroke-width="1.100"/>
<path d="M95.700 642 L101 636 H135" fill="none" stroke="#a224f0" stroke-width="3" stroke-linecap="round" stroke-linejoin="round" />
<path d="M95.700 667 L98 664.500 H135" fill="none" stroke="#a224f0" stroke-width="3" stroke-linecap="round" stroke-linejoin="round" />
<path d="M95.700 694 L110 679 H135" fill="none" stroke="#a224f0" stroke-width="3" stroke-linecap="round" stroke-linejoin="round" />
<path d="M95.700 719 L123 692 H135" fill="none" stroke="#a224f0" stroke-width="3" stroke-linecap="round" stroke-linejoin="round" />
<path d="M135 651.500 H148 L153 647" fill="none" stroke="#a224f0" stroke-width="3" stroke-linecap="round" stroke-linejoin="round" />
<path d="M136 706.500 H149 L152 709.500" fill="none" stroke="#a224f0" stroke-width="3" stroke-linecap="round" stroke-linejoin="round" />
<circle cx="95.700" cy="642" r="2.600" fill="#a224f0"/>
<circle cx="95.700" cy="667" r="2.600" fill="#a224f0"/>
<circle cx="95.700" cy="694" r="2.600" fill="#a224f0"/>
<circle cx="95.700" cy="719" r="2.600" fill="#a224f0"/>
<circle cx="153" cy="647" r="2.600" fill="#a224f0"/>
<circle cx="152" cy="709.5" r="2.600" fill="#a224f0"/>
<circle cx="121" cy="761" r="2.500" fill="none" stroke="#a224f0" stroke-width="1.200"/>
<circle cx="157" cy="676" r="2" fill="none" stroke="#7a3cb0" stroke-width="1"/>
<path d="M0 115.500 H905.500 V766" fill="none" stroke="#c2a8e2" stroke-width="3"/>
<rect x="0" y="85" width="2" height="681" fill="#9c9cb0"/>
</svg>
<div class="abs" style="left:1226px;top:605px;width:126px;height:161px;background:#ece9d8"></div>
<div class="abs" style="left:1226px;top:605px;width:2px;height:161px;background:#fff"></div>
<div class="abs" style="left:1231px;top:615px;width:130px;height:150px;border:2px solid;border-color:#8a887c #fff #fff #8a887c;background:#000"></div>
<svg class="abs" style="left:1233px;top:617px" width="119" height="146"><path d="M120 6.500H8.500V137.500H120M20.500 6.500V129.500H120" fill="none" stroke="#d8d8d8" stroke-width="1"/></svg>
<div class="abs" style="left:0;top:766px;width:1352px;height:79px;background:#ece9d8"></div>
<div class="abs" style="left:0;top:766px;width:1226px;height:1px;background:#fff"></div>
<div class="abs" style="left:2px;top:771px;width:1212px;height:73px;border:1px solid #1a1a1a;background:#fff"></div>
<div class="t" style="left:4.500px;top:775.0px;font-size:11px;letter-spacing:-0.220px">Starting Create artwork films...</div>
<div class="t" style="left:4.500px;top:788.1px;font-size:11px;letter-spacing:-0.220px">E- artwork had errors - use Viewlog to review the log file.</div>
<div class="t" style="left:4.500px;top:801.2px;font-size:11px;letter-spacing:-0.220px">Starting Create artwork films...</div>
<div class="t" style="left:4.500px;top:814.3px;font-size:11px;letter-spacing:-0.220px">E- artwork had errors - use Viewlog to review the log file.</div>
<div class="t" style="left:4.500px;top:827.4px;font-size:11px;letter-spacing:-0.220px">Command &gt;</div>
<div class="abs" style="left:1216px;top:771px;width:14px;height:73px;background:linear-gradient(90deg,#f1efe8,#fefefb)"></div>
<div class="abs" style="left:1216px;top:772px;width:14px;height:14px;background:linear-gradient(90deg,#d4defc,#bccbf8)"><svg width="14" height="14" style="position:absolute;left:0;top:0"><path d="M3.500 8.500l3.500-3.500 3.500 3.500" stroke="#4d6185" stroke-width="2" fill="none"/></svg></div>
<div class="abs" style="left:1216px;top:830px;width:14px;height:13px;background:linear-gradient(90deg,#d4defc,#bccbf8)"><svg width="14" height="13" style="position:absolute;left:0;top:0"><path d="M3.500 4.500l3.500 3.500 3.500-3.500" stroke="#4d6185" stroke-width="2" fill="none"/></svg></div>
<div class="abs" style="left:1231px;top:770px;width:125px;height:74px;border:1px solid;border-color:#404040 #fff #fff #404040;background:#ece9d8"></div>
<div class="abs" style="left:1240px;top:775px;width:12px;height:12px;background:#22e322;border:1px solid #207020"></div>
<div class="t" style="left:1254px;top:777.500px;font-size:11px;letter-spacing:-0.200px">Cmd:</div>
<div class="t" style="left:1289px;top:777.500px;font-size:11px;letter-spacing:-0.200px">artwork</div>
<div class="abs" style="left:1241px;top:797px;width:15px;height:12px;border:1px solid #303030;border-radius:3px;background:#f4f3ea;font-size:9px;line-height:10px;text-align:center">P</div>
<div class="abs" style="left:1262px;top:797px;width:15px;height:12px;border:1px solid #303030;border-radius:3px;background:#f4f3ea;font-size:9px;line-height:10px;text-align:center">A</div>
<div class="t" style="left:1282px;top:798px;font-size:12.500px;letter-spacing:-0.100px">49.809, 26.300</div>
<div class="abs" id="logwin" style="left:160px;top:431px;width:673px;height:419px;border-radius:8px 8px 0 0;background:#7b88d0;overflow:hidden">
<div class="abs" style="left:0;top:0;width:100%;height:29px;border-radius:8px 8px 0 0;background:linear-gradient(#7d96de 0,#9db6f2 8%,#86a4ec 20%,#7b9ae6 50%,#7f9fea 80%,#7690e0 100%)"></div>
<div class="abs" style="left:5px;top:29px;width:664px;height:21px;background:#ece9d8"></div>
<div class="abs" style="left:5px;top:49px;width:664px;height:1px;background:#8a8a90"></div>
<div class="abs" style="left:5px;top:50px;width:664px;height:400px;background:#fff"></div>
<div class="titlebtn" style="left:601px;top:6px;width:19px;height:19px;border-color:#dfe6fb;background:linear-gradient(135deg,#86a4f4,#5a7ee0 45%,#4c6cd0)"><svg width="17" height="17" viewBox="0 0 17 17" style="position:absolute;left:0;top:0"><rect x="4" y="11.500" width="7" height="3" fill="#fff"/></svg></div>
<div class="titlebtn" style="left:624px;top:6px;width:19px;height:19px;border-color:#dfe6fb;background:linear-gradient(135deg,#86a4f4,#5a7ee0 45%,#4c6cd0)"><svg width="17" height="17" viewBox="0 0 17 17" style="position:absolute;left:0;top:0"><rect x="4" y="5" width="9.500" height="8.500" fill="none" stroke="#fff" stroke-width="1.300"/><rect x="3.500" y="4" width="10.500" height="2.500" fill="#fff"/></svg></div>
<div class="titlebtn" style="left:647px;top:6px;width:19px;height:19px;border-color:#dfe6fb;background:linear-gradient(135deg,#d8a0a0,#c07888 50%,#b06878)"><svg width="17" height="17" viewBox="0 0 17 17" style="position:absolute;left:0;top:0"><path d="M4.500 4.500l8.500 8.500M13 4.500l-8.500 8.500" stroke="#fff" stroke-width="2"/></svg></div>
<div class="abs" style="left:651px;top:50px;width:18px;height:400px;background:linear-gradient(90deg,#f1efe8,#fefefb)"></div>
<div class="sbtn" style="left:652px;top:52px;width:14px;height:15px"><svg width="14" height="15" style="position:absolute;left:-1px;top:-1px"><path d="M3.500 9l3.500-3.500 3.500 3.500" stroke="#4d6185" stroke-width="2" fill="none"/></svg></div>
<div class="sbtn" style="left:652px;top:104px;width:14px;height:27px"><div class="abs" style="left:3px;top:9px;width:6px;height:1px;background:#8ea6e0;box-shadow:0 2px 0 #8ea6e0,0 4px 0 #8ea6e0,0 6px 0 #8ea6e0"></div></div>
<div class="abs" style="left:0;top:0;font-family:'Liberation Mono',monospace;font-size:13px;letter-spacing:0.200px;color:#262626">
<div class="t" style="left:24px;top:66px">---------------------------------------------------------</div>
<div class="t" style="left:24px;top:79px">Undefined line width                0.300</div>
<div class="t" style="left:24px;top:92px">Plot mode                           NONE</div>
<div class="t" style="left:24px;top:105px">Film mirrored                       NONE</div>
<div class="t" style="left:24px;top:118px">Offset x:                           0.000</div>
<div class="t" style="left:24px;top:131px">Offset y:                           0.000</div>
<div class="t" style="left:24px;top:144px">Plot negative                       NO</div>
<div class="t" style="left:24px;top:157px">Suppress unconnected internal pads  NO</div>
<div class="t" style="left:40px;top:196px">ERROR: aborting film - Shape with first seg=(0.200 0.200) [layer=TOP]</div>
<div class="t" style="left:72px;top:209px">has a void with extents [(72.408 59.008) (75.212 61.812)] that touches</div>
<div class="t" style="left:72px;top:222px">another shape with first seg=(0.200 63.800). Manually resolve problem.</div>
<div class="t" style="left:40px;top:248px">ERROR: aborting film - artwork will not be generated!</div>
<div class="t" style="left:16px;top:261px">Error in TOP--halting output.  Artwork file not generated.</div>
<div class="t" style="left:16px;top:274px">*** ERROR with TOP</div>
<div class="t" style="left:8px;top:339px">================================================================</div>
<div class="t" style="left:48px;top:352px">PROCESSING FILM &lt; BOTTOM.art &gt; ...</div>
<div class="t" style="left:8px;top:365px">================================================================</div>
<div class="t" style="left:24px;top:391px">FILM PARAMETERS :</div>
<div class="t" style="left:24px;top:404px">--------------------------------------------------------------</div>
</div>
</div>
<div class="abs" id="colordlg" style="left:-100px;top:172px;width:571px;height:398px;border-radius:8px 8px 0 0;background:linear-gradient(#0b54d8,#1a3c98 60%,#1b3a94);overflow:hidden">
<div class="abs" style="left:0;top:0;width:100%;height:30px;border-radius:8px 8px 0 0;background:linear-gradient(#0a52d2 0,#3b8df6 7%,#1468ee 16%,#0458e6 40%,#0559ea 75%,#0a63f4 90%,#0348cc 100%)"></div>
<div class="abs" style="left:0;top:30px;width:567px;height:364px;background:#ece9d8"></div>
<div class="abs" style="left:0;top:394px;width:100%;height:4px;background:linear-gradient(#0c46d4,#0837b0)"></div>
<div class="abs" style="left:567px;top:30px;width:4px;height:364px;background:linear-gradient(#0a50dc,#1240b0 30%,#1b3a94)"></div>
<div class="titlebtn" style="left:498px;top:6px;background:linear-gradient(135deg,#5c8cf8,#2a5ee0 45%,#1c48c8)"><svg width="19" height="19" viewBox="0 0 19 19" style="position:absolute;left:0;top:0"><rect x="4" y="12.500" width="7" height="3" fill="#fff"/></svg></div>
<div class="titlebtn" style="left:521px;top:6px;background:linear-gradient(135deg,#5c8cf8,#2a5ee0 45%,#1c48c8)"><svg width="19" height="19" viewBox="0 0 19 19" style="position:absolute;left:0;top:0"><rect x="4.500" y="5" width="10" height="9.500" fill="none" stroke="#fff" stroke-width="1.400"/><rect x="4" y="4" width="11" height="3" fill="#fff"/></svg></div>
<div class="titlebtn" style="left:544px;top:6px;background:linear-gradient(135deg,#f09070,#d84820 50%,#b83010)"><svg width="19" height="19" viewBox="0 0 19 19" style="position:absolute;left:0;top:0"><path d="M5 5l9 9M14 5l-9 9" stroke="#fff" stroke-width="2.200"/></svg></div>
<div class="t" style="left:308px;top:49px;font-size:11px;letter-spacing:-0.360px">Global visibility:</div>
<div class="abs" style="left:406px;top:43px;width:115px;height:21px;background:#fff;border:1px solid #7f9db9"></div>
<div class="abs" style="left:503px;top:45px;width:16px;height:17px;border-radius:2px;background:linear-gradient(#cfdcfc,#b4c8f6)"><svg width="16" height="17" style="position:absolute;left:0;top:0"><path d="M4.500 6.500l3.500 3.500 3.500-3.500" stroke="#4d6185" stroke-width="2" fill="none"/></svg></div>
<div class="t b" style="left:137px;top:81.5px;font-size:12px;letter-spacing:0">Via</div>
<div class="t b" style="left:210px;top:81.5px;font-size:12px;letter-spacing:0">Drc</div>
<div class="t b" style="left:294px;top:81.5px;font-size:12px;letter-spacing:0">Etch</div>
<div class="t b" style="left:375.5px;top:81.5px;font-size:12px;letter-spacing:0">Anti Etch</div>
<div class="t b" style="left:452.5px;top:81.5px;font-size:12px;letter-spacing:-0.450px">Boundary</div>
<div class="cb" style="left:140px;top:101px"></div>
<div class="cb" style="left:217px;top:101px"></div>
<div class="cb" style="left:294px;top:101px"></div>
<div class="cb" style="left:378px;top:101px"></div>
<div class="cb" style="left:469px;top:101px"></div>
<div class="abs" style="left:0;top:123px;width:567px;height:1px;background:#000"></div>
<div class="abs" style="left:0;top:280px;width:567px;height:1px;background:#000"></div>
<div class="cb on" style="left:141px;top:129px"></div><div class="sw" style="left:163px;top:129px;background:#a020f0"></div>
<div class="cb" style="left:141px;top:151px"></div><div class="sw" style="left:163px;top:151px;background:#0000cd"></div>
<div class="cb" style="left:141px;top:173px"></div><div class="sw" style="left:163px;top:173px;background:#7cc098"></div>
<div class="cb" style="left:141px;top:195px"></div><div class="sw" style="left:163px;top:195px;background:#7cc098"></div>
<div class="cb" style="left:141px;top:217px"></div><div class="sw" style="left:163px;top:217px;background:#7cc098"></div>
<div class="cb" style="left:141px;top:239px"></div><div class="sw" style="left:163px;top:239px;background:#7cc098"></div>
<div class="cb" style="left:141px;top:261px"></div><div class="sw" style="left:163px;top:261px;background:#7cc098"></div>
<div class="cb on" style="left:218px;top:129px"></div><div class="sw" style="left:240px;top:129px;background:#e81010"></div>
<div class="cb" style="left:218px;top:151px"></div><div class="sw" style="left:240px;top:151px;background:#e81010"></div>
<div class="cb on" style="left:295px;top:129px"></div><div class="sw" style="left:317px;top:129px;background:#a020f0"></div>
<div class="cb" style="left:295px;top:151px"></div><div class="sw" style="left:317px;top:151px;background:#0000cd"></div>
<div class="cb on" style="left:379px;top:129px"></div><div class="sw" style="left:401px;top:129px;background:#a020f0"></div>
<div class="cb" style="left:379px;top:151px"></div><div class="sw" style="left:401px;top:151px;background:#0000cd"></div>
<div class="cb on" style="left:470px;top:129px"></div><div class="sw" style="left:492px;top:129px;background:#a020f0"></div>
<div class="cb" style="left:470px;top:151px"></div><div class="sw" style="left:492px;top:151px;background:#0000cd"></div>
<div class="abs" style="left:550px;top:124px;width:16px;height:156px;background:linear-gradient(90deg,#f3f1ec,#fefefb)"></div>
<div class="sbtn" style="left:551px;top:126px;width:14px;height:14px"><svg width="15" height="15" style="position:absolute;left:-1.5px;top:-1.5px"><path d="M4 9l3.500-3.500 3.500 3.500" stroke="#4d6185" stroke-width="2" fill="none"/></svg></div>
<div class="sbtn" style="left:551px;top:264px;width:14px;height:14px"><svg width="15" height="15" style="position:absolute;left:-1.5px;top:-1.5px"><path d="M4 5.500l3.500 3.500 3.500-3.500" stroke="#4d6185" stroke-width="2" fill="none"/></svg></div>
<div class="sbtn" style="left:551px;top:142px;width:14px;height:69px"><div class="abs" style="left:3px;top:29px;width:6px;height:1px;background:#8ea6e0;box-shadow:0 2px 0 #8ea6e0,0 4px 0 #8ea6e0,0 6px 0 #8ea6e0"></div></div>
<div class="abs" style="left:0;top:306px;width:553px;height:51px;border:1px solid #d0d0bf;border-radius:4px"></div>
<div class="abs" style="left:85px;top:316px;width:26px;height:17px;border:1.500px solid #101010;background:#28c0f8;box-shadow:inset -1px -1px 0 rgba(120,120,110,.7),inset 1px 1px 0 rgba(255,255,255,.35)"></div>
<div class="abs" style="left:113px;top:316px;width:26px;height:17px;border:1.500px solid #101010;background:#ff6eb8;box-shadow:inset -1px -1px 0 rgba(120,120,110,.7),inset 1px 1px 0 rgba(255,255,255,.35)"></div>
<div class="abs" style="left:141px;top:316px;width:26px;height:17px;border:1.500px solid #101010;background:#18f060;box-shadow:inset -1px -1px 0 rgba(120,120,110,.7),inset 1px 1px 0 rgba(255,255,255,.35)"></div>
<div class="abs" style="left:169px;top:316px;width:26px;height:17px;border:1.500px solid #101010;background:#a828f0;box-shadow:inset -1px -1px 0 rgba(120,120,110,.7),inset 1px 1px 0 rgba(255,255,255,.35)"></div>
<div class="abs" style="left:197px;top:316px;width:26px;height:17px;border:1.500px solid #101010;background:#7a96c8;box-shadow:inset -1px -1px 0 rgba(120,120,110,.7),inset 1px 1px 0 rgba(255,255,255,.35)"></div>
<div class="abs" style="left:225px;top:316px;width:26px;height:17px;border:1.500px solid #101010;background:#f00808;box-shadow:inset -1px -1px 0 rgba(120,120,110,.7),inset 1px 1px 0 rgba(255,255,255,.35)"></div>
<div class="abs" style="left:253px;top:316px;width:26px;height:17px;border:1.500px solid #101010;background:#ffff10;box-shadow:inset -1px -1px 0 rgba(120,120,110,.7),inset 1px 1px 0 rgba(255,255,255,.35)"></div>
<div class="abs" style="left:281px;top:316px;width:26px;height:17px;border:1.500px solid #101010;background:#0808e8;box-shadow:inset -1px -1px 0 rgba(120,120,110,.7),inset 1px 1px 0 rgba(255,255,255,.35)"></div>
<div class="abs" style="left:309px;top:316px;width:26px;height:17px;border:1.500px solid #101010;background:#40ecd4;box-shadow:inset -1px -1px 0 rgba(120,120,110,.7),inset 1px 1px 0 rgba(255,255,255,.35)"></div>
<div class="abs" style="left:337px;top:316px;width:26px;height:17px;border:1.500px solid #101010;background:#b4b4b8;box-shadow:inset -1px -1px 0 rgba(120,120,110,.7),inset 1px 1px 0 rgba(255,255,255,.35)"></div>
<div class="abs" style="left:365px;top:316px;width:26px;height:17px;border:1.500px solid #101010;background:#78c494;box-shadow:inset -1px -1px 0 rgba(120,120,110,.7),inset 1px 1px 0 rgba(255,255,255,.35)"></div>
<div class="abs" style="left:85px;top:338px;width:26px;height:17px;border:1.500px solid #101010;background:#ffa8f4;box-shadow:inset -1px -1px 0 rgba(120,120,110,.7),inset 1px 1px 0 rgba(255,255,255,.35)"></div>
<div class="abs" style="left:113px;top:338px;width:26px;height:17px;border:1.500px solid #101010;background:#a88a8a;box-shadow:inset -1px -1px 0 rgba(120,120,110,.7),inset 1px 1px 0 rgba(255,255,255,.35)"></div>
<div class="abs" style="left:141px;top:338px;width:26px;height:17px;border:1.500px solid #101010;background:#18a4dc;box-shadow:inset -1px -1px 0 rgba(120,120,110,.7),inset 1px 1px 0 rgba(255,255,255,.35)"></div>
<div class="abs" style="left:169px;top:338px;width:26px;height:17px;border:1.500px solid #101010;background:#b010d0;box-shadow:inset -1px -1px 0 rgba(120,120,110,.7),inset 1px 1px 0 rgba(255,255,255,.35)"></div>
<div class="abs" style="left:197px;top:338px;width:26px;height:17px;border:1.500px solid #101010;background:#f0c008;box-shadow:inset -1px -1px 0 rgba(120,120,110,.7),inset 1px 1px 0 rgba(255,255,255,.35)"></div>
<div class="abs" style="left:225px;top:338px;width:26px;height:17px;border:1.500px solid #101010;background:#dcdfe0;box-shadow:inset -1px -1px 0 rgba(120,120,110,.7),inset 1px 1px 0 rgba(255,255,255,.35)"></div>
<div class="abs" style="left:253px;top:338px;width:26px;height:17px;border:1.500px solid #101010;background:#f07c80;box-shadow:inset -1px -1px 0 rgba(120,120,110,.7),inset 1px 1px 0 rgba(255,255,255,.35)"></div>
<div class="abs" style="left:281px;top:338px;width:26px;height:17px;border:1.500px solid #101010;background:#10f0a8;box-shadow:inset -1px -1px 0 rgba(120,120,110,.7),inset 1px 1px 0 rgba(255,255,255,.35)"></div>
<div class="abs" style="left:309px;top:338px;width:26px;height:17px;border:1.500px solid #101010;background:#a80410;box-shadow:inset -1px -1px 0 rgba(120,120,110,.7),inset 1px 1px 0 rgba(255,255,255,.35)"></div>
<div class="abs" style="left:337px;top:338px;width:26px;height:17px;border:1.500px solid #101010;background:#e894cc;box-shadow:inset -1px -1px 0 rgba(120,120,110,.7),inset 1px 1px 0 rgba(255,255,255,.35)"></div>
<div class="abs" style="left:365px;top:338px;width:26px;height:17px;border:1.500px solid #101010;background:#ffffff;box-shadow:inset -1px -1px 0 rgba(120,120,110,.7),inset 1px 1px 0 rgba(255,255,255,.35)"></div>
<div class="abs" style="left:407px;top:316px;width:41px;height:37px;border:1px solid #202020;background:#fff"></div>
<div class="btn" style="left:463px;top:327px;width:69px;height:20px;line-height:18px">Modify...</div>
<div class="btn dis" style="left:98px;top:371px;width:69px;height:20px;line-height:18px">Apply</div>
<div class="btn dis" style="left:176px;top:371px;width:68px;height:20px;line-height:18px">Reset</div>
<div class="btn" style="left:323px;top:371px;width:69px;height:20px;line-height:18px;box-shadow:inset 0 0 0 1px #f0f0ea">Help</div>
</div>
<div class="abs" id="artform" style="left:915px;top:51px;width:485px;height:554px;border-radius:8px 0 0 0;background:#7b88d0;overflow:hidden">
<div class="abs" style="left:0;top:0;width:100%;height:30px;border-radius:8px 0 0 0;background:linear-gradient(#7d96de 0,#9db6f2 8%,#86a4ec 20%,#7b9ae6 50%,#7f9fea 80%,#7690e0 100%)"></div>
<div class="abs" style="left:4px;top:30px;width:485px;height:520px;background:#ece9d8"></div>
<svg class="abs" style="left:6px;top:8px" width="17" height="17" viewBox="0 0 17 17"><rect x="1" y="1" width="11" height="11" fill="#e8e8f0" stroke="#505068" stroke-width="1"/><rect x="3" y="3" width="3" height="2" fill="#404060"/><rect x="7" y="3" width="3" height="2" fill="#404060"/><path d="M1 15l5-6 2 2 6-8 1 5-5 4-3 0z" fill="#e02020"/></svg>
<div class="t b" style="left:26px;top:11.5px;font-family:'Liberation Mono',monospace;font-size:12.500px;letter-spacing:0.500px;color:#dfe7fb">Artwork Control Form</div>
<div class="abs" style="left:18px;top:61px;width:500px;height:429px;border:1px solid #c4c1ae;box-shadow:-1px -1px 0 #fbfaf4;background:linear-gradient(#f6f5ec,#ece9d8 2.500%)"></div>
<div class="abs" style="left:87px;top:44px;width:102px;height:18px;border:1px solid #919b9c;border-bottom:none;border-radius:3px 3px 0 0;background:linear-gradient(#fff,#f0efe6)"></div>
<div class="t" style="left:92px;top:48px;letter-spacing:-0.350px">General Parameters</div>
<div class="abs" style="left:18px;top:41px;width:70px;height:21px;border:1px solid #919b9c;border-bottom:none;border-radius:3px 3px 0 0;background:#fcfcfa"></div>
<div class="abs" style="left:18px;top:41px;width:70px;height:3px;border-radius:3px 3px 0 0;background:linear-gradient(#e68b2c,#ffc73c)"></div>
<div class="t" style="left:26px;top:46px;letter-spacing:-0.420px">Film Control</div>
<div class="abs" style="left:27px;top:77px;width:230px;height:405px;border:1px solid #d0cdb9;border-radius:4px;box-shadow:inset 1px 1px 0 #f8f7f0"></div>
<div class="t" style="left:34px;top:72px;padding:0 2px;background:#ece9d8;color:#0046d5;letter-spacing:-0.200px">Available films</div>
<div class="abs" style="left:273px;top:77px;width:212px;height:405px;border:1px solid #d0cdb9;border-radius:4px;box-shadow:inset 1px 1px 0 #f8f7f0"></div>
<div class="t" style="left:279px;top:72px;padding:0 2px;background:#ece9d8;color:#0046d5;letter-spacing:-0.200px">Film options</div>
<div class="abs" style="left:42px;top:89px;width:195px;height:261px;border:1px solid #7f9db9;background:#fff"></div>
<svg class="abs" style="left:51px;top:94px" width="9" height="9"><rect x=".5" y=".5" width="8" height="8" fill="#fff" stroke="#808080"/><path d="M2 4.500h5M4.500 2v5" stroke="#000"/></svg>
<div class="abs" style="left:60px;top:98px;width:9px;height:0;border-top:1px dotted #9a9a9a"></div>
<svg class="abs" style="left:69px;top:92px" width="12" height="12"><rect x=".5" y=".5" width="11" height="11" fill="#fff" stroke="#606060"/><path d="M2.500 6l2.500 2.500 4.500-5.500" stroke="#000" stroke-width="1.800" fill="none"/></svg>
<svg class="abs" style="left:82px;top:91px" width="16" height="14"><path d="M.5 2.500h5l1.500 1.500h8v9H.5z" fill="#f8e878" stroke="#8a7a20"/><path d="M.5 5.500h14.500" stroke="#fff8c0"/></svg>
<div class="t" style="left:103.5px;top:93px;letter-spacing:-0.200px">PASTER_BOTTOM</div>
<svg class="abs" style="left:51px;top:110px" width="9" height="9"><rect x=".5" y=".5" width="8" height="8" fill="#fff" stroke="#808080"/><path d="M2 4.500h5M4.500 2v5" stroke="#000"/></svg>
<div class="abs" style="left:60px;top:114px;width:9px;height:0;border-top:1px dotted #9a9a9a"></div>
<svg class="abs" style="left:69px;top:108px" width="12" height="12"><rect x=".5" y=".5" width="11" height="11" fill="#fff" stroke="#606060"/><path d="M2.500 6l2.500 2.500 4.500-5.500" stroke="#000" stroke-width="1.800" fill="none"/></svg>
<svg class="abs" style="left:82px;top:107px" width="16" height="14"><path d="M.5 2.500h5l1.500 1.500h8v9H.5z" fill="#f8e878" stroke="#8a7a20"/><path d="M.5 5.500h14.500" stroke="#fff8c0"/></svg>
<div class="t" style="left:103.5px;top:109px;letter-spacing:-0.200px">PASTER_TOP</div>
<svg class="abs" style="left:51px;top:126px" width="9" height="9"><rect x=".5" y=".5" width="8" height="8" fill="#fff" stroke="#808080"/><path d="M2 4.500h5M4.500 2v5" stroke="#000"/></svg>
<div class="abs" style="left:60px;top:130px;width:9px;height:0;border-top:1px dotted #9a9a9a"></div>
<svg class="abs" style="left:69px;top:124px" width="12" height="12"><rect x=".5" y=".5" width="11" height="11" fill="#fff" stroke="#606060"/><path d="M2.500 6l2.500 2.500 4.500-5.500" stroke="#000" stroke-width="1.800" fill="none"/></svg>
<svg class="abs" style="left:82px;top:123px" width="16" height="14"><path d="M.5 2.500h5l1.500 1.500h8v9H.5z" fill="#f8e878" stroke="#8a7a20"/><path d="M.5 5.500h14.500" stroke="#fff8c0"/></svg>
<div class="t" style="left:103.5px;top:125px;letter-spacing:-0.200px">SILK_BOTTOM</div>
<svg class="abs" style="left:51px;top:142px" width="9" height="9"><rect x=".5" y=".5" width="8" height="8" fill="#fff" stroke="#808080"/><path d="M2 4.500h5M4.500 2v5" stroke="#000"/></svg>
<div class="abs" style="left:60px;top:146px;width:9px;height:0;border-top:1px dotted #9a9a9a"></div>
<svg class="abs" style="left:69px;top:140px" width="12" height="12"><rect x=".5" y=".5" width="11" height="11" fill="#fff" stroke="#606060"/><path d="M2.500 6l2.500 2.500 4.500-5.500" stroke="#000" stroke-width="1.800" fill="none"/></svg>
<svg class="abs" style="left:82px;top:139px" width="16" height="14"><path d="M.5 2.500h5l1.500 1.500h8v9H.5z" fill="#f8e878" stroke="#8a7a20"/><path d="M.5 5.500h14.500" stroke="#fff8c0"/></svg>
<div class="t" style="left:103.5px;top:141px;letter-spacing:-0.200px">SILK_TOP</div>
<svg class="abs" style="left:51px;top:158px" width="9" height="9"><rect x=".5" y=".5" width="8" height="8" fill="#fff" stroke="#808080"/><path d="M2 4.500h5M4.500 2v5" stroke="#000"/></svg>
<div class="abs" style="left:60px;top:162px;width:9px;height:0;border-top:1px dotted #9a9a9a"></div>
<svg class="abs" style="left:69px;top:156px" width="12" height="12"><rect x=".5" y=".5" width="11" height="11" fill="#fff" stroke="#606060"/><path d="M2.500 6l2.500 2.500 4.500-5.500" stroke="#000" stroke-width="1.800" fill="none"/></svg>
<svg class="abs" style="left:82px;top:155px" width="16" height="14"><path d="M.5 2.500h5l1.500 1.500h8v9H.5z" fill="#f8e878" stroke="#8a7a20"/><path d="M.5 5.500h14.500" stroke="#fff8c0"/></svg>
<div class="t" style="left:103.5px;top:157px;letter-spacing:-0.200px">SOLDER_BOTTOM</div>
<svg class="abs" style="left:51px;top:174px" width="9" height="9"><rect x=".5" y=".5" width="8" height="8" fill="#fff" stroke="#808080"/><path d="M2 4.500h5M4.500 2v5" stroke="#000"/></svg>
<div class="abs" style="left:60px;top:178px;width:9px;height:0;border-top:1px dotted #9a9a9a"></div>
<svg class="abs" style="left:69px;top:172px" width="12" height="12"><rect x=".5" y=".5" width="11" height="11" fill="#fff" stroke="#606060"/><path d="M2.500 6l2.500 2.500 4.500-5.500" stroke="#000" stroke-width="1.800" fill="none"/></svg>
<svg class="abs" style="left:82px;top:171px" width="16" height="14"><path d="M.5 2.500h5l1.500 1.500h8v9H.5z" fill="#f8e878" stroke="#8a7a20"/><path d="M.5 5.500h14.500" stroke="#fff8c0"/></svg>
<div class="t" style="left:103.5px;top:173px;letter-spacing:-0.200px">SOLDER_TOP</div>
<svg class="abs" style="left:51px;top:190px" width="9" height="9"><rect x=".5" y=".5" width="8" height="8" fill="#fff" stroke="#808080"/><path d="M2 4.500h5M4.500 2v5" stroke="#000"/></svg>
<div class="abs" style="left:60px;top:194px;width:9px;height:0;border-top:1px dotted #9a9a9a"></div>
<svg class="abs" style="left:69px;top:188px" width="12" height="12"><rect x=".5" y=".5" width="11" height="11" fill="#fff" stroke="#606060"/><path d="M2.500 6l2.500 2.500 4.500-5.500" stroke="#000" stroke-width="1.800" fill="none"/></svg>
<svg class="abs" style="left:82px;top:187px" width="16" height="14"><path d="M.5 2.500h5l1.500 1.500h8v9H.5z" fill="#f8e878" stroke="#8a7a20"/><path d="M.5 5.500h14.500" stroke="#fff8c0"/></svg>
<div class="t" style="left:103.5px;top:189px;letter-spacing:-0.200px">SOLD_TOP</div>
<svg class="abs" style="left:51px;top:206px" width="9" height="9"><rect x=".5" y=".5" width="8" height="8" fill="#fff" stroke="#808080"/><path d="M2 4.500h5" stroke="#000"/></svg>
<div class="abs" style="left:60px;top:210px;width:9px;height:0;border-top:1px dotted #9a9a9a"></div>
<svg class="abs" style="left:69px;top:204px" width="12" height="12"><rect x=".5" y=".5" width="11" height="11" fill="#fff" stroke="#606060"/><path d="M2.500 6l2.500 2.500 4.500-5.500" stroke="#000" stroke-width="1.800" fill="none"/></svg>
<svg class="abs" style="left:82px;top:203px" width="16" height="14"><path d="M.5 2.500h5l1.500 1.500h8v9H.5z" fill="#f8e878" stroke="#8a7a20"/><path d="M.5 5.500h14.500" stroke="#fff8c0"/></svg>
<div class="t" style="left:103.5px;top:205px;letter-spacing:-0.200px">TOP</div>
<div class="abs" style="left:55px;top:99px;width:0;height:106px;border-left:1px dotted #9a9a9a"></div>
<div class="abs" style="left:74px;top:217px;width:0;height:106px;border-left:1px dotted #9a9a9a"></div>
<div class="abs" style="left:74px;top:226px;width:12px;height:0;border-top:1px dotted #9a9a9a"></div>
<svg class="abs" style="left:88px;top:221px" width="12" height="11"><path d="M1 4l5-3.500 5 3.500-5 3.500z" fill="#d040d0" stroke="#702080" stroke-width=".8"/><path d="M1 4v2.500l5 3.500v-2.500zM11 4v2.500l-5 3.500v-2.500z" fill="#8a2098"/></svg>
<div class="t" style="left:106px;top:221px;letter-spacing:-0.050px;width:111px;overflow:hidden">BOUNDARY/TOP</div>
<div class="abs" style="left:74px;top:242px;width:12px;height:0;border-top:1px dotted #9a9a9a"></div>
<svg class="abs" style="left:88px;top:237px" width="12" height="11"><path d="M1 4l5-3.500 5 3.500-5 3.500z" fill="#d040d0" stroke="#702080" stroke-width=".8"/><path d="M1 4v2.500l5 3.500v-2.500zM11 4v2.500l-5 3.500v-2.500z" fill="#8a2098"/></svg>
<div class="t" style="left:106px;top:237px;letter-spacing:-0.050px;width:111px;overflow:hidden">ANTI ETCH/TOP</div>
<div class="abs" style="left:74px;top:258px;width:12px;height:0;border-top:1px dotted #9a9a9a"></div>
<svg class="abs" style="left:88px;top:253px" width="12" height="11"><path d="M1 4l5-3.500 5 3.500-5 3.500z" fill="#d040d0" stroke="#702080" stroke-width=".8"/><path d="M1 4v2.500l5 3.500v-2.500zM11 4v2.500l-5 3.500v-2.500z" fill="#8a2098"/></svg>
<div class="t" style="left:106px;top:253px;letter-spacing:-0.050px;width:111px;overflow:hidden">VIA CLASS/TOP</div>
<div class="abs" style="left:74px;top:274px;width:12px;height:0;border-top:1px dotted #9a9a9a"></div>
<svg class="abs" style="left:88px;top:269px" width="12" height="11"><path d="M1 4l5-3.500 5 3.500-5 3.500z" fill="#d040d0" stroke="#702080" stroke-width=".8"/><path d="M1 4v2.500l5 3.500v-2.500zM11 4v2.500l-5 3.500v-2.500z" fill="#8a2098"/></svg>
<div class="t" style="left:106px;top:269px;letter-spacing:-0.050px;width:111px;overflow:hidden">PIN/TOP</div>
<div class="abs" style="left:74px;top:290px;width:12px;height:0;border-top:1px dotted #9a9a9a"></div>
<svg class="abs" style="left:88px;top:285px" width="12" height="11"><path d="M1 4l5-3.500 5 3.500-5 3.500z" fill="#d040d0" stroke="#702080" stroke-width=".8"/><path d="M1 4v2.500l5 3.500v-2.500zM11 4v2.500l-5 3.500v-2.500z" fill="#8a2098"/></svg>
<div class="t" style="left:106px;top:285px;letter-spacing:-0.050px;width:111px;overflow:hidden">ETCH/TOP</div>
<div class="abs" style="left:74px;top:306px;width:12px;height:0;border-top:1px dotted #9a9a9a"></div>
<svg class="abs" style="left:88px;top:301px" width="12" height="11"><path d="M1 4l5-3.500 5 3.500-5 3.500z" fill="#d040d0" stroke="#702080" stroke-width=".8"/><path d="M1 4v2.500l5 3.500v-2.500zM11 4v2.500l-5 3.500v-2.500z" fill="#8a2098"/></svg>
<div class="t" style="left:106px;top:301px;letter-spacing:-0.050px;width:111px;overflow:hidden">DRC ERROR CLASS/T</div>
<div class="abs" style="left:74px;top:322px;width:12px;height:0;border-top:1px dotted #9a9a9a"></div>
<svg class="abs" style="left:88px;top:317px" width="12" height="11"><path d="M1 4l5-3.500 5 3.500-5 3.500z" fill="#d040d0" stroke="#702080" stroke-width=".8"/><path d="M1 4v2.500l5 3.500v-2.500zM11 4v2.500l-5 3.500v-2.500z" fill="#8a2098"/></svg>
<div class="t" style="left:106px;top:317px;letter-spacing:-0.050px;width:111px;overflow:hidden">BOARD GEOMETRY/C</div>
<div class="abs" style="left:218px;top:90px;width:18px;height:242px;background:linear-gradient(90deg,#f1efe8,#fefefb)"></div>
<div class="sbtn" style="left:219px;top:91px;width:15px;height:15px"><svg width="9" height="9" style="position:absolute;left:3.0px;top:4.0px;overflow:visible"><path d="M0 4l3.500-3.500 3.500 3.500" stroke="#4d6185" stroke-width="2" fill="none"/></svg></div>
<div class="sbtn" style="left:219px;top:315px;width:15px;height:15px"><svg width="9" height="9" style="position:absolute;left:3.0px;top:4.0px;overflow:visible"><path d="M0 0l3.500 3.500 3.500-3.500" stroke="#4d6185" stroke-width="2" fill="none"/></svg></div>
<div class="sbtn" style="left:219px;top:132px;width:15px;height:180px"><div class="abs" style="left:3px;top:84px;width:7px;height:1px;background:#8ea6e0;box-shadow:0 2px 0 #8ea6e0,0 4px 0 #8ea6e0,0 6px 0 #8ea6e0"></div></div>
<div class="abs" style="left:43px;top:332px;width:175px;height:17px;background:linear-gradient(#f1efe8,#fefefb)"></div>
<div class="abs" style="left:218px;top:332px;width:18px;height:17px;background:#fdfdf9"></div>
<div class="sbtn" style="left:45px;top:334px;width:15px;height:14px"><svg width="9" height="9" style="position:absolute;left:3.0px;top:3.5px;overflow:visible"><path d="M4 0l-3.500 3.500 3.500 3.500" stroke="#4d6185" stroke-width="2" fill="none"/></svg></div>
<div class="sbtn" style="left:201px;top:334px;width:15px;height:14px"><svg width="9" height="9" style="position:absolute;left:3.0px;top:3.5px;overflow:visible"><path d="M0 0l3.500 3.500-3.500 3.500" stroke="#4d6185" stroke-width="2" fill="none"/></svg></div>
<div class="sbtn" style="left:62px;top:334px;width:107px;height:14px"><div class="abs" style="left:49px;top:3px;width:1px;height:6px;background:#8ea6e0;box-shadow:2px 0 0 #8ea6e0,4px 0 0 #8ea6e0,6px 0 0 #8ea6e0"></div></div>
<div class="btn" style="left:49px;top:352px;width:61px;height:20px;line-height:18px;letter-spacing:-0.200px;">Select all</div>
<div class="btn" style="left:147px;top:352px;width:61px;height:20px;line-height:18px;letter-spacing:-0.200px;">Load...</div>
<div class="cb on" style="left:48px;top:388px"></div><div class="t" style="left:64.5px;top:389px;letter-spacing:-0.150px">Check database before artwork</div>
<div class="btn" style="left:91px;top:440px;width:85px;height:31px;line-height:29px;letter-spacing:-0.200px;">Create Artwork</div>
<div class="btn" style="left:26px;top:504px;width:61px;height:20px;line-height:18px;letter-spacing:-0.200px;box-shadow:inset 0 0 0 2px #a9c4f5;">OK</div>
<div class="btn" style="left:110px;top:504px;width:61px;height:20px;line-height:18px;letter-spacing:-0.200px;">Cancel</div>
<div class="btn" style="left:194px;top:504px;width:69px;height:20px;line-height:18px;letter-spacing:-0.200px;">Apertures...</div>
<div class="btn" style="left:285px;top:504px;width:61px;height:20px;line-height:18px;letter-spacing:-0.200px;">Viewlog...</div>
<div class="btn" style="left:433px;top:504px;width:61px;height:20px;line-height:18px;letter-spacing:-0.200px;"></div>
<div class="abs" style="left:4px;top:530px;width:485px;height:1px;background:#aca899;box-shadow:0 1px 0 #fff"></div>
<div class="t" style="left:6.5px;top:536px;letter-spacing:-0.100px">Error: A problem occurred - please check the logfile.</div>
<div class="abs" style="left:0;top:550px;width:485px;height:4px;background:#7b88d0"></div>
<div class="t" style="left:286.5px;top:93px;letter-spacing:-0.150px;letter-spacing:-0.500px;">Film name:</div>
<div class="t" style="left:385px;top:93px;letter-spacing:-0.150px;">TOP</div>
<div class="t" style="left:286.5px;top:115px;letter-spacing:-0.150px;">Rotation:</div>
<div class="abs" style="left:384px;top:109px;width:45px;height:21px;background:#fff;border:1px solid #7f9db9"></div>
<div class="t" style="left:390px;top:115px;letter-spacing:-0.150px;">0</div>
<div class="abs" style="left:411px;top:111px;width:16px;height:17px;border-radius:2px;background:linear-gradient(#cfdcfc,#b4c8f6)"><svg width="16" height="17" style="position:absolute;left:0;top:0"><path d="M4.500 6.500l3.500 3.500 3.500-3.500" stroke="#4d6185" stroke-width="2" fill="none"/></svg></div>
<div class="t" style="left:286.5px;top:148px;letter-spacing:-0.150px;">Offset   X:</div>
<div class="t" style="left:324px;top:170px;letter-spacing:-0.150px;">Y:</div>
<div class="abs" style="left:384px;top:142px;width:80px;height:21px;background:#fff;border:1px solid #7f9db9;box-shadow:inset 1px 1px 0 #c8c8c8"></div>
<div class="t" style="left:388px;top:147.5px">0.000</div>
<div class="abs" style="left:384px;top:166px;width:80px;height:20px;background:#fff;border:1px solid #7f9db9;box-shadow:inset 1px 1px 0 #c8c8c8"></div>
<div class="t" style="left:388px;top:171.0px">0.000</div>
<div class="t" style="left:286.5px;top:213.5px;letter-spacing:-0.150px;">Undefined line width:</div>
<div class="t" style="left:286.5px;top:236px;letter-spacing:-0.150px;">Shape bounding box:</div>
<div class="abs" style="left:398px;top:209px;width:80px;height:21px;background:#fff;border:1px solid #7f9db9;box-shadow:inset 1px 1px 0 #c8c8c8"></div>
<div class="t" style="left:402px;top:214.5px">0.300</div>
<div class="abs" style="left:398px;top:231px;width:80px;height:21px;background:#fff;border:1px solid #7f9db9;box-shadow:inset 1px 1px 0 #c8c8c8"></div>
<div class="t" style="left:402px;top:236.5px">2.540</div>
<div class="t" style="left:286.5px;top:269px;letter-spacing:-0.150px;letter-spacing:-0.350px;">Plot mode:</div>
<svg class="abs" style="left:397px;top:266.0px" width="13" height="13"><circle cx="6.500" cy="6.500" r="5.800" fill="#f8f8f4" stroke="#1c5180"/><circle cx="6.500" cy="6.500" r="2.500" fill="#21a121"/></svg>
<div class="t" style="left:414.5px;top:267.5px;letter-spacing:-0.150px;">Positive</div>
<svg class="abs" style="left:397px;top:288.0px" width="13" height="13"><circle cx="6.500" cy="6.500" r="5.800" fill="#f8f8f4" stroke="#1c5180"/></svg>
<div class="t" style="left:414.5px;top:289.5px;letter-spacing:-0.150px;">Negative</div>
<div class="cb" style="left:279px;top:310.0px"></div>
<div class="t" style="left:295.5px;top:311.5px;letter-spacing:-0.150px;letter-spacing:-0.550px;">Film mirrored</div>
<div class="cb" style="left:279px;top:332.0px"></div>
<div class="t" style="left:295.5px;top:333.5px;letter-spacing:-0.150px;">Full contact thermal-reliefs</div>
<div class="cb" style="left:279px;top:354.0px"></div>
<div class="t" style="left:295.5px;top:355.5px;letter-spacing:-0.150px;">Suppress unconnected pads</div>
<div class="cb dis" style="left:279px;top:376.0px"></div>
<div class="t" style="left:295.5px;top:377.5px;letter-spacing:-0.150px;color:#aca899;">Draw missing pad apertures</div>
<div class="cb dis" style="left:279px;top:398.0px"></div>
<div class="t" style="left:295.5px;top:399.5px;letter-spacing:-0.150px;color:#aca899;">Use aperture rotation</div>
<div class="cb dis" style="left:279px;top:420.0px"></div>
<div class="t" style="left:295.5px;top:421.5px;letter-spacing:-0.150px;color:#aca899;">Suppress shape fill</div>
<div class="cb on" style="left:279px;top:442.0px"></div>
<div class="t" style="left:295.5px;top:443.5px;letter-spacing:-0.150px;">Vector based pad behavior</div>
</div>
<svg class="abs" style="left:0;top:0;pointer-events:none" width="1352" height="845" viewBox="0 0 1352 845">
<ellipse cx="375.200" cy="281.500" rx="31.700" ry="38.100" fill="none" stroke="#cc1414" stroke-width="3.200" transform="rotate(2 375 281)"/>
<ellipse cx="1060.400" cy="277.300" rx="63" ry="7.100" fill="none" stroke="#cc1414" stroke-width="2.900"/>
<ellipse cx="1052" cy="592.400" rx="133.800" ry="9.100" fill="none" stroke="#cc1414" stroke-width="2.800"/>
<path d="M920 595 Q860 614 796.500 638" fill="none" stroke="#d81818" stroke-width="2.800"/>
<path d="M808.400 622.300 L796 638.300 L813.100 643.600" fill="none" stroke="#d81818" stroke-width="2.800" stroke-linejoin="round" stroke-linecap="round"/>
<path d="M257 640.200 L752 639.600" stroke="#cc1414" stroke-width="2.400"/>
<path d="M231.500 652.500 L792 653.500" stroke="#cc1414" stroke-width="2.400"/>
<path d="M228.500 667 L790 666" stroke="#cc1414" stroke-width="2.400"/>
</svg>
<div class="t b" style="left:1178px;top:782px;font-size:17px;color:rgba(110,160,200,.62);letter-spacing:0.900px;font-family:'Liberation Sans','Noto Sans CJK SC',sans-serif">ChinaUnix <span style="font-size:14px;color:rgba(120,175,215,.6)">博客</span></div>
<div class="abs" style="left:1180px;top:801px;width:34px;height:1px;background:rgba(110,160,200,.45)"></div>
<div class="t" style="left:1181px;top:803px;font-size:15px;color:rgba(110,160,200,.7)">blog</div>
<svg class="abs" style="left:1200px;top:800px" width="44" height="44" viewBox="0 0 44 44"><circle cx="21.500" cy="21.500" r="17" fill="rgba(255,255,255,.72)"/><path d="M12 18 H30 M32 18 L14 32" stroke="rgba(90,90,90,.75)" stroke-width="1.300" fill="none"/><circle cx="11" cy="18" r="2.200" fill="#fff" stroke="rgba(70,70,70,.8)" stroke-width="1"/><circle cx="32" cy="18" r="2.200" fill="#fff" stroke="rgba(70,70,70,.8)" stroke-width="1"/></svg>
<div class="t b" style="left:1245px;top:804.500px;font-size:17px;font-style:italic;color:#fff;text-shadow:1px 1px 1px rgba(60,60,60,.8),-1px -1px 1px rgba(120,120,120,.5);font-family:'Liberation Sans','Noto Sans CJK SC',sans-serif;transform:skewX(-10deg)">电子发烧友</div>
<div class="t b" style="left:1246px;top:822.500px;font-size:11.200px;color:#fff;text-shadow:1px 1px 1px rgba(60,60,60,.85),0 0 2px rgba(100,100,100,.6);letter-spacing:0.100px">www.elecfans.com</div>
</div></body></html>
